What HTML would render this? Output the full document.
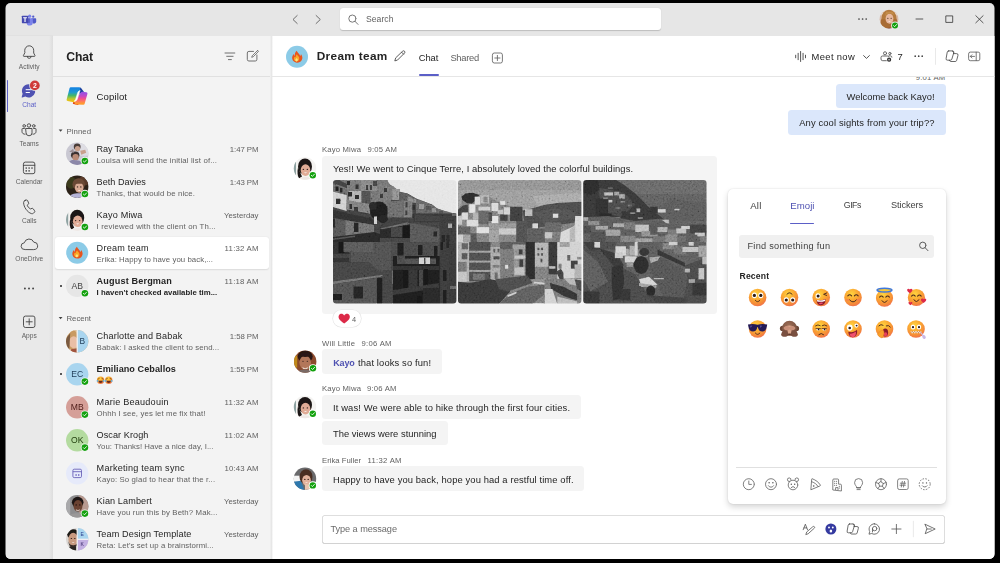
<!DOCTYPE html><html><head><meta charset="utf-8"><title>Chat</title><style>
html,body{margin:0;padding:0;background:#000;}body{width:1000px;height:563px;overflow:hidden;position:relative;font-family:"Liberation Sans", sans-serif;}
#win{position:absolute;left:0;top:0;width:1000px;height:563px;clip-path:inset(3px 5.5px 4px 5.5px round 5px);background:#e6e6e6;overflow:hidden;}
.t{position:absolute;white-space:nowrap;}#tx{position:absolute;left:0;top:0;width:1000px;height:563px;will-change:transform;}
svg{position:absolute;overflow:visible;will-change:transform;}

</style></head><body><div id="win">
<div style="position:absolute;left:5.5px;top:35.6px;width:47.1px;height:524px;background:#e9e9e9;border-radius:0px;"></div>
<div style="position:absolute;left:49.4px;top:36px;width:3.2px;height:524px;background:linear-gradient(90deg,#e9e9e9,#dddddd);border-radius:0px;"></div>
<div style="position:absolute;left:5.5px;top:35.2px;width:47.1px;height:0.8px;background:#e1e1e1;border-radius:0px;"></div>
<div style="position:absolute;left:52.6px;top:36px;width:217.8px;height:524px;background:#f3f3f3;border-radius:0px;"></div>
<div style="position:absolute;left:272px;top:36px;width:723px;height:524px;background:#ffffff;border-radius:0px;"></div>
<div style="position:absolute;left:270px;top:36px;width:3.2px;height:524px;background:linear-gradient(90deg,#f3f3f3,#e6e6e6 45%,#e9e9e9 60%,#ffffff);border-radius:0px;"></div>
<div style="position:absolute;left:52.6px;top:76px;width:217.8px;height:1px;background:#e0e0e0;border-radius:0px;"></div>
<div style="position:absolute;left:272px;top:76px;width:723px;height:1px;background:#e6e6e6;border-radius:0px;"></div>
<div style="position:absolute;left:340px;top:8px;width:321px;height:22px;background:#ffffff;border-radius:3px;box-shadow:0 0.5px 1px rgba(0,0,0,.18);"></div>
<div style="position:absolute;left:6.8px;top:79.8px;width:1.7px;height:32.2px;background:#5b5fc7;border-radius:1px;"></div>
<div style="position:absolute;left:55px;top:236.8px;width:214px;height:32.2px;background:#ffffff;border-radius:3px;box-shadow:0 0.5px 1.5px rgba(0,0,0,.10);"></div>
<div style="position:absolute;left:60.2px;top:284.9px;width:2px;height:2px;background:#242424;border-radius:1px;"></div>
<div style="position:absolute;left:60.2px;top:373.3px;width:2px;height:2px;background:#242424;border-radius:1px;"></div>
<div style="position:absolute;left:418.5px;top:74px;width:20.5px;height:2px;background:#5b5fc7;border-radius:1px;"></div>
<div style="position:absolute;left:272px;top:77px;width:723px;height:8px;overflow:hidden"><span style="position:absolute;right:49.600px;top:-3.700px;font-size:7.700px;line-height:10px;color:#616161;letter-spacing:.2px;white-space:nowrap">9:01 AM</span></div>
<div style="position:absolute;left:835.8px;top:84px;width:109.8px;height:24.4px;background:#dbe7fb;border-radius:3.5px;"></div>
<div style="position:absolute;left:788.4px;top:110px;width:157.2px;height:24.8px;background:#dbe7fb;border-radius:3.5px;"></div>
<div style="position:absolute;left:322px;top:156px;width:395px;height:158.2px;background:#f4f4f4;border-radius:3.5px;"></div>
<div style="position:absolute;left:333.3px;top:309.6px;width:27.7px;height:17.4px;background:#ffffff;border-radius:9px;box-shadow:0 0 0 0.6px #e3e3e3;"></div>
<div style="position:absolute;left:322px;top:349px;width:120.3px;height:25px;background:#f4f4f4;border-radius:3.5px;"></div>
<div style="position:absolute;left:322px;top:394.5px;width:259px;height:24.5px;background:#f4f4f4;border-radius:3.5px;"></div>
<div style="position:absolute;left:322px;top:420.8px;width:125.7px;height:24.2px;background:#f4f4f4;border-radius:3.5px;"></div>
<div style="position:absolute;left:322px;top:466px;width:262px;height:24.8px;background:#f4f4f4;border-radius:3.5px;"></div>
<div style="position:absolute;left:321.8px;top:514.6px;width:623.7px;height:29px;background:#ffffff;border-radius:3.5px;box-shadow:inset 0 0 0 0.7px #d4d4d4, inset 0 -0.6px 0 0.2px #bdbdbd;"></div>
<div style="position:absolute;left:728.4px;top:189px;width:217.2px;height:314.8px;background:#ffffff;border-radius:5px;box-shadow:0 3px 6px rgba(0,0,0,.17),0 0 1.5px rgba(0,0,0,.14);"></div>
<div style="position:absolute;left:790.3px;top:222.5px;width:24.2px;height:1.6px;background:#5b5fc7;border-radius:1px;"></div>
<div style="position:absolute;left:739px;top:235.2px;width:195.3px;height:22.4px;background:#f0f0f0;border-radius:3px;"></div>
<div style="position:absolute;left:736.2px;top:467.2px;width:200.8px;height:0.7px;background:#e0e0e0;border-radius:0px;"></div>
<svg width="1000" height="563" viewBox="0 0 1000 563" style="left:0;top:0"><defs><filter id="b1" x="-20%" y="-20%" width="140%" height="140%"><feGaussianBlur stdDeviation="0.7"/></filter>
<filter id="b2" x="-20%" y="-20%" width="140%" height="140%"><feGaussianBlur stdDeviation="1.2"/></filter>
<filter id="b05" x="-20%" y="-20%" width="140%" height="140%"><feGaussianBlur stdDeviation="0.45"/></filter>
<clipPath id="c1"><circle r="11.2"/></clipPath>
<clipPath id="c2"><circle r="11.2"/></clipPath>
<clipPath id="c3"><circle r="11.2"/></clipPath>
<clipPath id="c4"><circle r="11"/></clipPath>
<clipPath id="c5"><circle r="11.2"/></clipPath>
<clipPath id="c6"><circle r="11.2"/></clipPath>
<clipPath id="c7"><circle r="11.2"/></clipPath>
<clipPath id="c8"><circle r="11.2"/></clipPath>
<clipPath id="c9"><circle r="11.2"/></clipPath>
<clipPath id="c10"><circle r="11.2"/></clipPath>
<clipPath id="c11"><circle r="11.2"/></clipPath>
<clipPath id="c12"><circle r="11.2"/></clipPath>
<clipPath id="c13"><circle r="11"/></clipPath>
<clipPath id="c14"><circle r="11.2"/></clipPath>
<clipPath id="c15"><circle r="11.2"/></clipPath>
<clipPath id="c16"><circle r="11.2"/></clipPath>
<clipPath id="c17"><circle r="11.2"/></clipPath>
<clipPath id="c18"><circle r="9.4"/></clipPath>
<linearGradient id="cpl" x1="0" y1="0" x2="0" y2="1"><stop offset="0" stop-color="#1686e0"/><stop offset=".3" stop-color="#1f9ad0"/><stop offset=".55" stop-color="#45b76a"/><stop offset=".8" stop-color="#b9c832"/><stop offset="1" stop-color="#f2c010"/></linearGradient>
<linearGradient id="cpr" x1="0" y1="0" x2="0" y2="1"><stop offset="0" stop-color="#9a4fe0"/><stop offset=".3" stop-color="#c548c4"/><stop offset=".55" stop-color="#f2508c"/><stop offset=".8" stop-color="#ff7a5a"/><stop offset="1" stop-color="#ff9a2e"/></linearGradient>
<filter id="pb" x="-5%" y="-5%" width="110%" height="110%"><feGaussianBlur stdDeviation="0.65"/></filter>
<filter id="pb2" x="-5%" y="-5%" width="110%" height="110%"><feGaussianBlur stdDeviation="1.1"/></filter>
<filter id="nz" x="0" y="0" width="100%" height="100%"><feTurbulence type="fractalNoise" baseFrequency="0.55" numOctaves="2" seed="7" result="n"/><feColorMatrix in="n" type="matrix" values="0.33 0.33 0.33 0 0  0.33 0.33 0.33 0 0  0.33 0.33 0.33 0 0  0 0 0 0 1" result="g"/><feComponentTransfer in="g"><feFuncR type="linear" slope="2.2" intercept="-0.6"/><feFuncG type="linear" slope="2.2" intercept="-0.6"/><feFuncB type="linear" slope="2.2" intercept="-0.6"/></feComponentTransfer></filter>
<clipPath id="pc1"><rect width="123.4" height="123.4" rx="3.2"/></clipPath>
<clipPath id="pc2"><rect width="123.4" height="123.4" rx="3.2"/></clipPath>
<clipPath id="pc3"><rect width="123.4" height="123.4" rx="3.2"/></clipPath>
<radialGradient id="eg" cx=".42" cy=".3" r=".8"><stop offset="0" stop-color="#ffd540"/><stop offset=".4" stop-color="#fbab32"/><stop offset=".75" stop-color="#f4863a"/><stop offset="1" stop-color="#ec6260"/></radialGradient>
<radialGradient id="mg" cx=".45" cy=".35" r=".75"><stop offset="0" stop-color="#a07058"/><stop offset="1" stop-color="#6b4636"/></radialGradient></defs><g transform="translate(27.05 19.3) scale(0.72)" >
<circle cx="3.6" cy="-4.3" r="2.3" fill="#7b83eb"/>
<circle cx="8.6" cy="-3.6" r="1.6" fill="#5059c9"/>
<path d="M6.2 -1.4h5.6a.9 .9 0 0 1 .9 .9v3.6a2.9 2.9 0 0 1 -5.2 1.7z" fill="#5059c9"/>
<path d="M-1.2 -1.4h8.3a.9 .9 0 0 1 .9 .9v4.6a4.3 4.3 0 0 1 -8.6 .6z" fill="#7b83eb"/>
<path d="M0.4 -1.4h3.6v6.4h-3.6z" fill="#3d42a8" opacity=".55"/>
<rect x="-7.200" y="-5" width="8.800" height="10.400" rx=".9" fill="#4549b0"/>
<path d="M-5.400 -2.800h5.200v1.400h-1.800v5h-1.600v-5h-1.800z" fill="#fff"/>
</g>
<g transform="translate(295 19.5)" ><path d="M2.2 -4 L-2 0 L2.2 4" fill="none" stroke="#616161" stroke-width="0.9" stroke-linecap="round" stroke-linejoin="round" /></g>
<g transform="translate(318.3 19.5)" ><path d="M-2.2 -4 L2 0 L-2.2 4" fill="none" stroke="#616161" stroke-width="0.9" stroke-linecap="round" stroke-linejoin="round" /></g>
<g transform="translate(352.4 18.6)" ><path d="M3.6 0a3.6 3.6 0 1 1 -7.2 0a3.6 3.6 0 1 1 7.2 0M2.6 2.7L5.6 5.8" fill="none" stroke="#616161" stroke-width="0.85" stroke-linecap="round" stroke-linejoin="round" /></g>
<g transform="translate(862.6 19)" ><circle cx="-3.6" r=".85" fill="#424242"/><circle r=".85" fill="#424242"/><circle cx="3.6" r=".85" fill="#424242"/></g>
<g transform="translate(0 0)" ><path d="M916 19h6.8" fill="none" stroke="#333" stroke-width="0.8" stroke-linecap="round" stroke-linejoin="round" /><path d="M946.2 15.9h6.5v6.5h-6.5z" fill="none" stroke="#333" stroke-width="0.8" stroke-linecap="round" stroke-linejoin="round" /><path d="M975.8 15.7l7.3 7.1M983.1 15.7l-7.3 7.1" fill="none" stroke="#333" stroke-width="0.8" stroke-linecap="round" stroke-linejoin="round" /></g>
<g transform="translate(29.2 52)" ><path d="M-4.5 -1.7a4.5 4.5 0 0 1 9 0v2.7l1.3 2.6a.5 .5 0 0 1 -.45 .75h-10.7a.5 .5 0 0 1 -.45 -.75l1.3 -2.6z" fill="none" stroke="#424242" stroke-width="0.9" stroke-linecap="round" stroke-linejoin="round" /><path d="M-1.9 4.5a1.9 1.9 0 0 0 3.8 0" fill="none" stroke="#424242" stroke-width="0.9" stroke-linecap="round" stroke-linejoin="round" /></g>
<g transform="translate(28.7 90.9)" ><path d="M0 -6.6a6.6 6.6 0 1 1 -3.3 12.3l-3.1 .9a.5 .5 0 0 1 -.6 -.6l.9 -3.1a6.6 6.6 0 0 1 6.1 -9.5z" fill="#4f52b2"/>
<path d="M-2.6 -1.2h5.2M-2.6 1.6h3.4" stroke="#fff" stroke-width="1" stroke-linecap="round"/></g>
<g transform="translate(34.8 85.4)" ><circle r="5.6" fill="#e9e9e9"/><circle r="4.9" fill="#cf3a3a"/><text x="0" y="2.4" text-anchor="middle" font-family="Liberation Sans, sans-serif" font-size="6.8" font-weight="700" fill="#fff">2</text></g>
<g transform="translate(29 129.8)" ><path d="M1.75 -4.3a1.75 1.75 0 1 1 -3.5 0a1.75 1.75 0 1 1 3.5 0" fill="none" stroke="#424242" stroke-width="0.9" stroke-linecap="round" stroke-linejoin="round" /><path d="M-3 -1.3h6v4.3a3 3 0 0 1 -6 0z" fill="none" stroke="#424242" stroke-width="0.9" stroke-linecap="round" stroke-linejoin="round" /><path d="M-3.5 -3.9a1.3 1.3 0 1 1 -2.6 0a1.3 1.3 0 1 1 2.6 0M6.1 -3.9a1.3 1.3 0 1 1 -2.6 0a1.3 1.3 0 1 1 2.6 0" fill="none" stroke="#424242" stroke-width="0.9" stroke-linecap="round" stroke-linejoin="round" /><path d="M-4.6 -1.3h-1.8a.6 .6 0 0 0 -.6 .6v2.6a2.6 2.6 0 0 0 3.2 2.5M4.6 -1.3h1.8a.6 .6 0 0 1 .6 .6v2.6a2.6 2.6 0 0 1 -3.2 2.5" fill="none" stroke="#424242" stroke-width="0.9" stroke-linecap="round" stroke-linejoin="round" /></g>
<g transform="translate(29.1 167.9)" ><path d="M-5.7 -4a1.8 1.8 0 0 1 1.8 -1.8h7.8a1.8 1.8 0 0 1 1.8 1.8v8a1.8 1.8 0 0 1 -1.8 1.8h-7.8a1.8 1.8 0 0 1 -1.8 -1.8zM-5.7 -2.6h11.4" fill="none" stroke="#424242" stroke-width="0.9" stroke-linecap="round" stroke-linejoin="round" /><circle cx="-2.9" cy="0.2" r=".8" fill="#424242"/><circle cx="0" cy="0.2" r=".8" fill="#424242"/><circle cx="2.9" cy="0.2" r=".8" fill="#424242"/><circle cx="-2.9" cy="3" r=".8" fill="#424242"/><circle cx="0" cy="3" r=".8" fill="#424242"/></g>
<g transform="translate(28.7 206.3)" ><path d="M-3.6 -5.9l1.2 -.4a1.1 1.1 0 0 1 1.3 .6l1 2.4a1.1 1.1 0 0 1 -.3 1.3l-1.2 1a7.5 7.5 0 0 0 3.3 3.6l1.6 -.5a1.1 1.1 0 0 1 1.2 .4l1.4 2a1.1 1.1 0 0 1 -.1 1.4l-.9 .9a2.2 2.2 0 0 1 -2.2 .5c-4.100 -1.300 -7.800 -6.700 -7.800 -11a2.2 2.2 0 0 1 1.500 -2.200z" fill="none" stroke="#424242" stroke-width="0.9" stroke-linecap="round" stroke-linejoin="round" /></g>
<g transform="translate(29.2 244.7)" ><path d="M-4.4 4.9a3.4 3.4 0 0 1 -.5 -6.8a5 5 0 0 1 9.500 -.6a3.700 3.700 0 0 1 .3 7.400z" fill="none" stroke="#424242" stroke-width="0.9" stroke-linecap="round" stroke-linejoin="round" /></g>
<g transform="translate(29 288.5)" ><circle cx="-4.1" r=".95" fill="#424242"/><circle r=".95" fill="#424242"/><circle cx="4.1" r=".95" fill="#424242"/></g>
<g transform="translate(29.2 321.8)" ><path d="M-5.7 -3.9a1.8 1.8 0 0 1 1.8 -1.8h7.8a1.8 1.8 0 0 1 1.8 1.8v7.8a1.8 1.8 0 0 1 -1.8 1.8h-7.8a1.8 1.8 0 0 1 -1.8 -1.8zM0 -3v6M-3 0h6" fill="none" stroke="#424242" stroke-width="0.9" stroke-linecap="round" stroke-linejoin="round" /></g>
<g transform="translate(229.9 56.3)" ><path d="M-4.9 -3.3h9.800M-3.2 0h6.400M-1.500 3.300h3" fill="none" stroke="#616161" stroke-width="0.9" stroke-linecap="round" stroke-linejoin="round" /></g>
<g transform="translate(252 56)" ><path d="M1.5 -4.600h-4.600a1.600 1.600 0 0 0 -1.600 1.600v6.400a1.600 1.600 0 0 0 1.600 1.600h6.400a1.600 1.600 0 0 0 1.600 -1.600v-4.400" fill="none" stroke="#616161" stroke-width="0.9" stroke-linecap="round" stroke-linejoin="round" /><path d="M5.200 -5.200l-5 5l-.5 1.500l1.500 -.5l5 -5a.7 .7 0 0 0 -1 -1z" fill="none" stroke="#616161" stroke-width="0.8" stroke-linecap="round" stroke-linejoin="round" /></g>
<g transform="translate(60.6 130.6)" ><path d="M-1.900 -1.100h3.800l-1.900 2.300z" fill="#424242"/></g>
<g transform="translate(60.6 318)" ><path d="M-1.900 -1.100h3.800l-1.900 2.300z" fill="#424242"/></g>
<g transform="translate(399.3 56)" ><path d="M3.300 -4.800a1.300 1.300 0 0 1 1.900 1.900l-7 7l-2.700 .8l.8 -2.700zM2.300 -3.800l1.900 1.900" fill="none" stroke="#424242" stroke-width="0.85" stroke-linecap="round" stroke-linejoin="round" /></g>
<g transform="translate(497.4 58)" ><path d="M-5 -3.200a1.800 1.800 0 0 1 1.800 -1.800h6.400a1.800 1.800 0 0 1 1.800 1.800v6.400a1.800 1.800 0 0 1 -1.800 1.800h-6.400a1.800 1.800 0 0 1 -1.800 -1.800zM0 -2.600v5.200M-2.600 0h5.200" fill="none" stroke="#616161" stroke-width="0.85" stroke-linecap="round" stroke-linejoin="round" /></g>
<g transform="translate(800.6 56.5)" ><path d="M-4.900 -1.300v2.600M-2.450 -3.200v6.400M0 -5v10M2.450 -3.200v6.400M4.900 -1.300v2.600" fill="none" stroke="#424242" stroke-width="0.9" stroke-linecap="round" stroke-linejoin="round" /></g>
<g transform="translate(866.5 57)" ><path d="M-2.900 -1.400l2.900 2.800l2.900 -2.800" fill="none" stroke="#424242" stroke-width="0.9" stroke-linecap="round" stroke-linejoin="round" /></g>
<g transform="translate(0 0)" ><path d="M886.600 53.300a1.550 1.550 0 1 1 -3.100 0a1.550 1.550 0 1 1 3.100 0M891.050 53.500a1.150 1.150 0 1 1 -2.300 0a1.150 1.150 0 1 1 2.300 0" fill="none" stroke="#424242" stroke-width="0.8" stroke-linecap="round" stroke-linejoin="round" /><path d="M886.300 60.700h-3.600a1.700 1.700 0 0 1 -1.700 -1.700v-1.500a1.500 1.500 0 0 1 1.500 -1.500h5a1.500 1.500 0 0 1 1.100 .5M888.900 55.900h1.800a1.300 1.300 0 0 1 1.200 1.300" fill="none" stroke="#424242" stroke-width="0.8" stroke-linecap="round" stroke-linejoin="round" /><circle cx="889.1" cy="59.7" r="2.100" fill="#2a2a2a"/><path d="M889.1 58.700v2M888.1 59.700h2" stroke="#fff" stroke-width=".5"/></g>
<g transform="translate(918.7 56.2)" ><circle cx="-3.500" r=".85" fill="#424242"/><circle r=".85" fill="#424242"/><circle cx="3.500" r=".85" fill="#424242"/></g>
<g transform="translate(0 0)" ><rect x="935.1" y="48" width=".7" height="16.800" fill="#e0e0e0"/></g>
<g transform="translate(952 56.2)" ><path d="M-3.300 -5.300h3.600a1.500 1.500 0 0 1 1.450 1.900l-1.900 6.300a1.500 1.500 0 0 1 -1.450 1.100h-2.800a1.500 1.500 0 0 1 -1.450 -1.900l1.100 -6.300a1.500 1.500 0 0 1 1.450 -1.100z" fill="none" stroke="#424242" stroke-width="0.8" stroke-linecap="round" stroke-linejoin="round" /><path d="M1.700 -2.600h2.800a1.500 1.500 0 0 1 1.450 1.900l-1.300 4.900a1.500 1.500 0 0 1 -1.450 1.100h-4.400a1.500 1.500 0 0 1 -1.400 -1.300" fill="none" stroke="#424242" stroke-width="0.8" stroke-linecap="round" stroke-linejoin="round" /><path d="M.4 -5.200c1.200 .4 1.400 1.300 1.200 2.400" fill="none" stroke="#424242" stroke-width="0.8" stroke-linecap="round" stroke-linejoin="round" /></g>
<g transform="translate(974.2 56.4)" ><path d="M-5.600 -2.700a1.600 1.600 0 0 1 1.600 -1.600h8a1.600 1.600 0 0 1 1.600 1.600v5.400a1.600 1.600 0 0 1 -1.600 1.600h-8a1.600 1.600 0 0 1 -1.600 -1.600zM2 -4.200v8.400M-3.700 0h4M-2.300 -1.600l-1.600 1.600l1.600 1.600" fill="none" stroke="#616161" stroke-width="0.85" stroke-linecap="round" stroke-linejoin="round" /></g>
<g transform="translate(808.5 529)" ><path d="M-5.300 .7l2.150 -5.500l2.150 5.500M-4.500 -1.100h2.700" fill="none" stroke="#505050" stroke-width="0.8" stroke-linecap="round" stroke-linejoin="round" /><path d="M4.300 -2.300a1.050 1.050 0 0 1 1.500 1.500l-6.200 5.600l-2.300 .8l.8 -2.300z" fill="none" stroke="#505050" stroke-width="0.78" stroke-linecap="round" stroke-linejoin="round" /></g>
<g transform="translate(830.9 529)" ><circle r="5.500" fill="#353aa0"/><circle cx="-1.900" cy="-1.500" r=".95" fill="#fff"/><circle cx="1.900" cy="-1.500" r=".95" fill="#fff"/><ellipse cx="0" cy="2.100" rx="1.300" ry="1.500" fill="#fff"/></g>
<g transform="translate(852.7 529) scale(0.95)" ><path d="M-3.300 -5.300h3.600a1.500 1.500 0 0 1 1.450 1.900l-1.900 6.300a1.500 1.500 0 0 1 -1.450 1.100h-2.800a1.500 1.500 0 0 1 -1.450 -1.900l1.100 -6.300a1.500 1.500 0 0 1 1.450 -1.100z" fill="none" stroke="#424242" stroke-width="0.8" stroke-linecap="round" stroke-linejoin="round" /><path d="M1.700 -2.600h2.800a1.500 1.500 0 0 1 1.450 1.900l-1.300 4.900a1.500 1.500 0 0 1 -1.450 1.100h-4.400a1.500 1.500 0 0 1 -1.400 -1.300" fill="none" stroke="#424242" stroke-width="0.8" stroke-linecap="round" stroke-linejoin="round" /><path d="M.4 -5.200c1.200 .4 1.400 1.300 1.200 2.400" fill="none" stroke="#424242" stroke-width="0.8" stroke-linecap="round" stroke-linejoin="round" /></g>
<g transform="translate(874.3 529)" ><path d="M0 -5.200a5.200 5.200 0 1 1 -2.600 9.700l-2.700 .7l.7 -2.700a5.200 5.200 0 0 1 4.600 -7.700z" fill="none" stroke="#505050" stroke-width="0.8" stroke-linecap="round" stroke-linejoin="round" /><path d="M2.600 -.4a2.200 2.200 0 1 1 -4.400 0a2.200 2.200 0 1 1 4.400 0M-1.800 -.4v3.400" fill="none" stroke="#505050" stroke-width="0.8" stroke-linecap="round" stroke-linejoin="round" /></g>
<g transform="translate(896.4 529)" ><path d="M0 -4.600v9.200M-4.600 0h9.200" fill="none" stroke="#505050" stroke-width="0.8" stroke-linecap="round" stroke-linejoin="round" /></g>
<g transform="translate(0 0)" ><rect x="912.9" y="520.8" width=".7" height="16.400" fill="#e0e0e0"/></g>
<g transform="translate(930 529)" ><path d="M-4.800 -4.700l10 4.700l-10 4.700l1.600 -4.700zM-3.200 0h4.500" fill="none" stroke="#505050" stroke-width="0.8" stroke-linecap="round" stroke-linejoin="round" /></g>
<g transform="translate(923.3 246.2)" ><path d="M2.700 -.9a3.200 3.200 0 1 1 -6.400 0a3.200 3.200 0 1 1 6.400 0M1.800 1.500L4.700 4.500" fill="none" stroke="#424242" stroke-width="0.85" stroke-linecap="round" stroke-linejoin="round" /></g>
<g transform="translate(748.8 484.2)" ><path d="M5.500 0a5.500 5.500 0 1 1 -11 0a5.500 5.500 0 1 1 11 0M0 -3.200v3.400h2.600" fill="none" stroke="#555" stroke-width="0.75" stroke-linecap="round" stroke-linejoin="round" /></g>
<g transform="translate(771 484.2)" ><path d="M5.500 0a5.500 5.500 0 1 1 -11 0a5.500 5.500 0 1 1 11 0M-2.600 1.500a3 3 0 0 0 5.200 0" fill="none" stroke="#555" stroke-width="0.75" stroke-linecap="round" stroke-linejoin="round" /><circle cx="-1.900" cy="-1.400" r=".75" fill="#555"/><circle cx="1.900" cy="-1.400" r=".75" fill="#555"/></g>
<g transform="translate(793 484.2)" ><path d="M4.800 .8a4.800 4.800 0 1 1 -9.600 0a4.800 4.800 0 1 1 9.600 0M-3.500 -2.700a1.800 1.800 0 1 1 1.500 -1.500M3.500 -2.700a1.800 1.800 0 1 0 -1.500 -1.500M-1.800 3.600a2 2 0 0 1 3.600 0" fill="none" stroke="#555" stroke-width="0.75" stroke-linecap="round" stroke-linejoin="round" /><circle cx="-1.700" cy="0" r=".7" fill="#555"/><circle cx="1.700" cy="0" r=".7" fill="#555"/></g>
<g transform="translate(815.2 484.2)" ><path d="M-4.300 5.200l.8 -10.200a.5 .5 0 0 1 .7 -.4c3.400 1.300 6.300 3.500 8 6.300a.5 .5 0 0 1 -.2 .7zM-3.200 -2.400c2.800 1 4.700 2.500 6 4.600" fill="none" stroke="#555" stroke-width="0.75" stroke-linecap="round" stroke-linejoin="round" /><circle cx="-1.500" cy="1.800" r=".8" fill="#555"/></g>
<g transform="translate(836.8 484.2)" ><path d="M-4 5.400v-9.600a1 1 0 0 1 1 -1h3.800a1 1 0 0 1 1 1v4.200h1.800a1 1 0 0 1 1 1v5.400zM-1.200 5.400v-2h2.400v2" fill="none" stroke="#555" stroke-width="0.75" stroke-linecap="round" stroke-linejoin="round" /><circle cx="-2.1" cy="-3" r=".55" fill="#555"/><circle cx="-0.2" cy="-3" r=".55" fill="#555"/><circle cx="-2.1" cy="-1" r=".55" fill="#555"/><circle cx="-0.2" cy="-1" r=".55" fill="#555"/><circle cx="-2.1" cy="1" r=".55" fill="#555"/><circle cx="-0.2" cy="1" r=".55" fill="#555"/><circle cx="2.5" cy="2" r=".55" fill="#555"/><circle cx="2.5" cy="3.8" r=".55" fill="#555"/></g>
<g transform="translate(858.6 484.2)" ><path d="M-1.800 3.400c0 -1.500 -2.200 -2.400 -2.200 -5a4 4 0 0 1 8 0c0 2.600 -2.200 3.500 -2.200 5zM-1.600 5.400h3.200M-1.800 3.400h3.600" fill="none" stroke="#555" stroke-width="0.75" stroke-linecap="round" stroke-linejoin="round" /></g>
<g transform="translate(881 484.2)" ><path d="M5.500 0a5.500 5.500 0 1 1 -11 0a5.500 5.500 0 1 1 11 0M0 -2.400l2.300 1.700l-.9 2.700h-2.800l-.9 -2.700zM0 -2.400v-3M2.300 -.7l2.900 -1M1.400 2l1.800 2.500M-1.400 2l-1.800 2.500M-2.300 -.7l-2.900 -1" fill="none" stroke="#555" stroke-width="0.75" stroke-linecap="round" stroke-linejoin="round" /></g>
<g transform="translate(902.9 484.2)" ><path d="M-5.300 -3.700a1.600 1.600 0 0 1 1.600 -1.600h7.400a1.600 1.600 0 0 1 1.600 1.600v7.400a1.600 1.600 0 0 1 -1.600 1.600h-7.400a1.600 1.600 0 0 1 -1.600 -1.600zM-.6 -2.800l-1 5.600M1.600 -2.800l-1 5.600M-2.600 -1h5.400M-2.900 1h5.400" fill="none" stroke="#555" stroke-width="0.72" stroke-linecap="round" stroke-linejoin="round" /></g>
<g transform="translate(924.7 484.2)" ><circle r="5.500" fill="none" stroke="#555" stroke-width=".8" stroke-dasharray="1.500 1.380"/><path d="M-2.400 1.600a2.800 2.800 0 0 0 4.800 0" fill="none" stroke="#555" stroke-width="0.75" stroke-linecap="round" stroke-linejoin="round" /><circle cx="-1.800" cy="-1.300" r=".7" fill="#555"/><circle cx="1.800" cy="-1.300" r=".7" fill="#555"/></g>
<g transform="translate(77.2 153.7)" ><g clip-path="url(#c1)"><rect x="-12" y="-12" width="24" height="24" fill="#c9c8d2"/>
<g filter="url(#b1)">
<rect x="2" y="-12" width="12" height="14" fill="#dedde3"/>
<ellipse cx="0" cy="-7" rx="3.4" ry="3.2" fill="#4a3d38"/>
<ellipse cx="0.3" cy="-5" rx="2.6" ry="2.6" fill="#c9a08c"/>
<ellipse cx="-2" cy="1.5" rx="4.2" ry="3.6" fill="#3a3030"/>
<ellipse cx="-1.6" cy="3.6" rx="3.2" ry="3.2" fill="#b98a76"/>
<path d="M-9 12c0 -5 3 -6 7 -5.500c4 0 7 1 8 5.500z" fill="#8b87a8"/>
<path d="M3 -3l5 -1l1 3l-5 2z" fill="#c9a08c"/>
<path d="M-8 -2l4 -3l1 4z" fill="#9c8f95"/>
</g></g><circle cx="7.7" cy="7.3" r="4.2" fill="#f3f3f3"/><circle cx="7.7" cy="7.3" r="3.3" fill="#13a10e"/><path d="M6.2 7.3999999999999995l1.1 1.1l2 -2.2" fill="none" stroke="#fff" stroke-width=".85" stroke-linecap="round" stroke-linejoin="round"/></g>
<g transform="translate(77.2 186.7)" ><g clip-path="url(#c2)"><rect x="-12" y="-12" width="24" height="24" fill="#2c2218"/>
<g filter="url(#b1)">
<ellipse cx="-6" cy="-4" rx="5" ry="6" fill="#3b3a1e"/>
<ellipse cx="7" cy="-6" rx="5" ry="5" fill="#5a3a2a"/>
<ellipse cx="1.500" cy="-2.500" rx="6.200" ry="6" fill="#6b4a36"/>
<ellipse cx="2" cy="1" rx="4.300" ry="5" fill="#d9ab94"/>
<path d="M-8 12c1 -5 4 -5.500 10 -5.500c5 0 8 1 9 5.500z" fill="#b5b3d6"/>
<ellipse cx="1.500" cy="-5.200" rx="4.600" ry="2.300" fill="#6b4a36"/>
<ellipse cx="0.3" cy="0.2" rx=".75" ry=".55" fill="#3a2620"/><ellipse cx="3.6" cy="0.2" rx=".75" ry=".55" fill="#3a2620"/><path d="M0.6000000000000001 3.2q1.4 1.54 2.8 0z" fill="#fff"/></g></g><circle cx="7.7" cy="7.3" r="4.2" fill="#f3f3f3"/><circle cx="7.7" cy="7.3" r="3.3" fill="#13a10e"/><path d="M6.2 7.3999999999999995l1.1 1.1l2 -2.2" fill="none" stroke="#fff" stroke-width=".85" stroke-linecap="round" stroke-linejoin="round"/></g>
<g transform="translate(77.2 219.7)" ><g clip-path="url(#c3)"><rect x="-12" y="-12" width="24" height="24" fill="#f4f3f1"/>
<g filter="url(#b1)">
<path d="M-12 -6l3 -3v16l-3 3z" fill="#8fa3a3"/>
<ellipse cx="0" cy="-2" rx="7" ry="8" fill="#1d1715"/>
<path d="M-7 -1c-1 5 -.5 8 1 11l3 -2z" fill="#1d1715"/>
<ellipse cx=".5" cy="1.600" rx="4.800" ry="5.800" fill="#e0ab96"/>
<path d="M-5 -2c2 -3 6 -4 10 -1l-1 -3h-8z" fill="#1d1715"/>
<path d="M-7 12c1 -3 3 -3.500 7 -3.500s6 .5 8 3.500z" fill="#efe9e6"/>
<ellipse cx="-1.6" cy="0.9" rx=".75" ry=".55" fill="#3a2620"/><ellipse cx="2.4" cy="0.9" rx=".75" ry=".55" fill="#3a2620"/><path d="M-1.0 3.9q1.5 1.6500000000000001 3 0z" fill="#fff"/></g></g><circle cx="7.7" cy="7.3" r="4.2" fill="#f3f3f3"/><circle cx="7.7" cy="7.3" r="3.3" fill="#13a10e"/><path d="M6.2 7.3999999999999995l1.1 1.1l2 -2.2" fill="none" stroke="#fff" stroke-width=".85" stroke-linecap="round" stroke-linejoin="round"/></g>
<g transform="translate(77.2 252.7)" ><g clip-path="url(#c4)"><rect x="-12" y="-12" width="24" height="24" fill="#8ccbe7"/>
<path d="M-.3 -6c.6 1.800 2.800 2.800 3.600 5.200c.6 -.6 .7 -1.300 .6 -2c1.500 1.700 2 4.200 .9 6.100c-1 1.800 -2.900 2.700 -4.900 2.600c-2.200 -.1 -4.100 -1.500 -4.600 -3.600c-.5 -2 .3 -3.700 1.500 -5c0 .8 .3 1.500 .9 1.900c-.1 -2.200 .6 -3.900 2 -5.200z" fill="#e8541e"/>
<path d="M-.1 -2.500c.5 1.300 2 2 2.300 3.700c.3 1.700 -.8 3.300 -2.400 3.400c-1.500 .1 -2.800 -1 -2.900 -2.500c-.1 -1.100 .5 -1.900 1.100 -2.500c.1 .5 .3 .8 .7 1c0 -1.300 .4 -2.300 1.200 -3.100z" fill="#f9a825"/>
<path d="M-.2 1.200c.5 .6 1.100 1.200 1 2.100c-.1 .8 -.6 1.300 -1.200 1.300c-.7 0 -1.300 -.6 -1.300 -1.400c0 -.8 .9 -1.200 1.500 -2z" fill="#ffe082"/></g></g>
<g transform="translate(77.2 285.9)" ><g clip-path="url(#c5)"><rect x="-12" y="-12" width="24" height="24" fill="#e6e6e6"/><text x="0" y="3.10" text-anchor="middle" font-family="Liberation Sans, sans-serif" font-size="8.6" fill="#424242">AB</text></g><circle cx="7.7" cy="7.3" r="4.2" fill="#f3f3f3"/><circle cx="7.7" cy="7.3" r="3.3" fill="#13a10e"/><path d="M6.2 7.3999999999999995l1.1 1.1l2 -2.2" fill="none" stroke="#fff" stroke-width=".85" stroke-linecap="round" stroke-linejoin="round"/></g>
<g transform="translate(77.2 341.3)" ><g clip-path="url(#c6)"><rect x="-12" y="-12" width="24" height="24" fill="#d9b98c"/>
<g filter="url(#b1)">
<ellipse cx="-6" cy="-2" rx="7" ry="10" fill="#c89a62"/>
<ellipse cx="-3.500" cy="1" rx="4.500" ry="6" fill="#e9bfa6"/>
<path d="M-12 -2l5 -6l-1 18h-4z" fill="#7a5a40"/>
<path d="M-6 8l6 -1v5h-8z" fill="#a0533c"/>
</g><rect x="0" y="-12" width="12" height="24" fill="#a9d5ef"/><rect x="-.6" y="-12" width="1.200" height="24" fill="#f5f5f5"/><text x="5.200" y="3" text-anchor="middle" font-family="Liberation Sans, sans-serif" font-size="8.400" fill="#1f3b57">B</text></g></g>
<g transform="translate(77.2 374.3)" ><g clip-path="url(#c7)"><rect x="-12" y="-12" width="24" height="24" fill="#a9d5ef"/><text x="0" y="3.10" text-anchor="middle" font-family="Liberation Sans, sans-serif" font-size="8.6" fill="#1f3b57">EC</text></g><circle cx="7.7" cy="7.3" r="4.2" fill="#f3f3f3"/><circle cx="7.7" cy="7.3" r="3.3" fill="#13a10e"/><path d="M6.2 7.3999999999999995l1.1 1.1l2 -2.2" fill="none" stroke="#fff" stroke-width=".85" stroke-linecap="round" stroke-linejoin="round"/></g>
<g transform="translate(77.2 407.3)" ><g clip-path="url(#c8)"><rect x="-12" y="-12" width="24" height="24" fill="#d59f98"/><text x="0" y="3.10" text-anchor="middle" font-family="Liberation Sans, sans-serif" font-size="8.6" fill="#4d1a17">MB</text></g><circle cx="7.7" cy="7.3" r="4.2" fill="#f3f3f3"/><circle cx="7.7" cy="7.3" r="3.3" fill="#13a10e"/><path d="M6.2 7.3999999999999995l1.1 1.1l2 -2.2" fill="none" stroke="#fff" stroke-width=".85" stroke-linecap="round" stroke-linejoin="round"/></g>
<g transform="translate(77.2 440.3)" ><g clip-path="url(#c9)"><rect x="-12" y="-12" width="24" height="24" fill="#b4dba0"/><text x="0" y="3.10" text-anchor="middle" font-family="Liberation Sans, sans-serif" font-size="8.6" fill="#23400f">OK</text></g><circle cx="7.7" cy="7.3" r="4.2" fill="#f3f3f3"/><circle cx="7.7" cy="7.3" r="3.3" fill="#13a10e"/><path d="M6.2 7.3999999999999995l1.1 1.1l2 -2.2" fill="none" stroke="#fff" stroke-width=".85" stroke-linecap="round" stroke-linejoin="round"/></g>
<g transform="translate(77.2 473.3)" ><g clip-path="url(#c10)"><rect x="-12" y="-12" width="24" height="24" fill="#e6eafa"/><path d="M-4.300 -2.800a1.300 1.300 0 0 1 1.300 -1.300h6a1.300 1.300 0 0 1 1.300 1.300v5.800a1.300 1.300 0 0 1 -1.300 1.300h-6a1.300 1.300 0 0 1 -1.300 -1.300zM-4.300 -1.600h8.600" fill="none" stroke="#6a62b8" stroke-width=".9"/><path d="M-1.800 .6h1.400v2.200h-1.400zM.8 .6h1.400v2.200h-1.400z" fill="#8a84cc"/></g></g>
<g transform="translate(77.2 506.3)" ><g clip-path="url(#c11)"><rect x="-12" y="-12" width="24" height="24" fill="#8d8d8f"/>
<g filter="url(#b1)">
<rect x="2" y="-12" width="12" height="24" fill="#b89a90"/>
<rect x="-12" y="-12" width="5" height="24" fill="#a9a9ab"/>
<ellipse cx=".5" cy="-4" rx="5.800" ry="5.500" fill="#1e1512"/>
<ellipse cx=".8" cy="-.5" rx="4.500" ry="5.800" fill="#6b4331"/>
<path d="M-1.500 3c1.500 1 3 1 4.500 0l-.8 1.500h-3z" fill="#e6dcd6"/>
<path d="M-9 12c1 -4 4 -5 9.500 -5s8.500 1 9.500 5z" fill="#9a9898"/>
<ellipse cx="-1" cy="-1.4" rx=".75" ry=".55" fill="#1a100c"/><ellipse cx="2.6" cy="-1.4" rx=".75" ry=".55" fill="#1a100c"/><path d="M0.75 2.6q0.05 0.05500000000000001 0.1 0z" fill="#fff"/></g></g><circle cx="7.7" cy="7.3" r="4.2" fill="#f3f3f3"/><circle cx="7.7" cy="7.3" r="3.3" fill="#13a10e"/><path d="M6.2 7.3999999999999995l1.1 1.1l2 -2.2" fill="none" stroke="#fff" stroke-width=".85" stroke-linecap="round" stroke-linejoin="round"/></g>
<g transform="translate(77.2 539.3)" ><g clip-path="url(#c12)"><rect x="-12" y="-12" width="24" height="24" fill="#dad6d2"/>
<g filter="url(#b1)">
<ellipse cx="-4" cy="-5" rx="6" ry="5" fill="#1f1a18"/>
<ellipse cx="-4" cy="0" rx="4.800" ry="6.500" fill="#c79a80"/>
<path d="M-9 2c1 5 3 7 5 7s4 -2 5 -7c-1 3 -3 4 -5 4s-4 -1 -5 -4z" fill="#3a2e28"/>
<path d="M-12 12c0 -3 2 -4.500 4 -4.500h7v4.500z" fill="#2a2624"/>
<ellipse cx="-5.8" cy="-0.8" rx=".75" ry=".55" fill="#2a1a14"/><ellipse cx="-2.4" cy="-0.8" rx=".75" ry=".55" fill="#2a1a14"/><path d="M-5.3 2.6q1.3 1.4300000000000002 2.6 0z" fill="#fff"/></g><rect x="0" y="-12" width="12" height="12" fill="#a9d5ef"/><rect x="0" y="0" width="12" height="12" fill="#c3b0e2"/><rect x="-.6" y="-12" width="1.200" height="24" fill="#f5f5f5"/><rect x="0" y="-.6" width="12" height="1.200" fill="#f5f5f5"/><text x="5" y="-3.800" text-anchor="middle" font-family="Liberation Sans, sans-serif" font-size="5" fill="#2a3f8f">E</text><text x="5" y="7.200" text-anchor="middle" font-family="Liberation Sans, sans-serif" font-size="5" fill="#3b2a6b">K</text></g></g>
<g transform="translate(297 56.8)" ><g clip-path="url(#c13)"><rect x="-12" y="-12" width="24" height="24" fill="#8ccbe7"/>
<path d="M-.3 -6c.6 1.800 2.800 2.800 3.600 5.200c.6 -.6 .7 -1.300 .6 -2c1.500 1.700 2 4.200 .9 6.100c-1 1.800 -2.900 2.700 -4.900 2.600c-2.200 -.1 -4.100 -1.500 -4.600 -3.600c-.5 -2 .3 -3.700 1.500 -5c0 .8 .3 1.500 .9 1.900c-.1 -2.200 .6 -3.900 2 -5.200z" fill="#e8541e"/>
<path d="M-.1 -2.500c.5 1.300 2 2 2.300 3.700c.3 1.700 -.8 3.300 -2.400 3.400c-1.500 .1 -2.800 -1 -2.900 -2.500c-.1 -1.100 .5 -1.900 1.100 -2.500c.1 .5 .3 .8 .7 1c0 -1.300 .4 -2.300 1.200 -3.100z" fill="#f9a825"/>
<path d="M-.2 1.200c.5 .6 1.100 1.200 1 2.100c-.1 .8 -.6 1.300 -1.200 1.300c-.7 0 -1.300 -.6 -1.300 -1.400c0 -.8 .9 -1.200 1.500 -2z" fill="#ffe082"/></g></g>
<g transform="translate(305 168.5)" ><g clip-path="url(#c14)"><rect x="-12" y="-12" width="24" height="24" fill="#f4f3f1"/>
<g filter="url(#b1)">
<path d="M-12 -6l3 -3v16l-3 3z" fill="#8fa3a3"/>
<ellipse cx="0" cy="-2" rx="7" ry="8" fill="#1d1715"/>
<path d="M-7 -1c-1 5 -.5 8 1 11l3 -2z" fill="#1d1715"/>
<ellipse cx=".5" cy="1.600" rx="4.800" ry="5.800" fill="#e0ab96"/>
<path d="M-5 -2c2 -3 6 -4 10 -1l-1 -3h-8z" fill="#1d1715"/>
<path d="M-7 12c1 -3 3 -3.500 7 -3.500s6 .5 8 3.500z" fill="#efe9e6"/>
<ellipse cx="-1.6" cy="0.9" rx=".75" ry=".55" fill="#3a2620"/><ellipse cx="2.4" cy="0.9" rx=".75" ry=".55" fill="#3a2620"/><path d="M-1.0 3.9q1.5 1.6500000000000001 3 0z" fill="#fff"/></g></g><circle cx="7.8" cy="6.7" r="4.1000000000000005" fill="#ffffff"/><circle cx="7.8" cy="6.7" r="3.2" fill="#13a10e"/><path d="M6.3 6.8l1.1 1.1l2 -2.2" fill="none" stroke="#fff" stroke-width=".85" stroke-linecap="round" stroke-linejoin="round"/></g>
<g transform="translate(305.2 361.6)" ><g clip-path="url(#c15)"><rect x="-12" y="-12" width="24" height="24" fill="#8c4a2c"/>
<g filter="url(#b1)">
<rect x="-12" y="-6" width="4" height="12" fill="#c08a1a"/>
<ellipse cx="0" cy="-5" rx="7.500" ry="6" fill="#2a1712"/>
<ellipse cx="0" cy="1" rx="5.800" ry="7" fill="#b3775a"/>
<ellipse cx="0" cy="-7" rx="5" ry="2.500" fill="#2a1712"/>
<path d="M-9 12c1 -3 4 -4 9 -4s8 1 9 4z" fill="#7a6a66"/>
<path d="M-3 5.500c2 1.500 4 1.500 6 0l-1 2h-4z" fill="#e8d8d0"/>
<ellipse cx="-2.2" cy="-0.3" rx=".75" ry=".55" fill="#3a2620"/><ellipse cx="2.2" cy="-0.3" rx=".75" ry=".55" fill="#3a2620"/><path d="M-0.05 4.2q0.05 0.05500000000000001 0.1 0z" fill="#fff"/></g></g><circle cx="7.8" cy="6.7" r="4.1000000000000005" fill="#ffffff"/><circle cx="7.8" cy="6.7" r="3.2" fill="#13a10e"/><path d="M6.3 6.8l1.1 1.1l2 -2.2" fill="none" stroke="#fff" stroke-width=".85" stroke-linecap="round" stroke-linejoin="round"/></g>
<g transform="translate(305 407)" ><g clip-path="url(#c16)"><rect x="-12" y="-12" width="24" height="24" fill="#f4f3f1"/>
<g filter="url(#b1)">
<path d="M-12 -6l3 -3v16l-3 3z" fill="#8fa3a3"/>
<ellipse cx="0" cy="-2" rx="7" ry="8" fill="#1d1715"/>
<path d="M-7 -1c-1 5 -.5 8 1 11l3 -2z" fill="#1d1715"/>
<ellipse cx=".5" cy="1.600" rx="4.800" ry="5.800" fill="#e0ab96"/>
<path d="M-5 -2c2 -3 6 -4 10 -1l-1 -3h-8z" fill="#1d1715"/>
<path d="M-7 12c1 -3 3 -3.500 7 -3.500s6 .5 8 3.500z" fill="#efe9e6"/>
<ellipse cx="-1.6" cy="0.9" rx=".75" ry=".55" fill="#3a2620"/><ellipse cx="2.4" cy="0.9" rx=".75" ry=".55" fill="#3a2620"/><path d="M-1.0 3.9q1.5 1.6500000000000001 3 0z" fill="#fff"/></g></g><circle cx="7.8" cy="6.7" r="4.1000000000000005" fill="#ffffff"/><circle cx="7.8" cy="6.7" r="3.2" fill="#13a10e"/><path d="M6.3 6.8l1.1 1.1l2 -2.2" fill="none" stroke="#fff" stroke-width=".85" stroke-linecap="round" stroke-linejoin="round"/></g>
<g transform="translate(305 478.7)" ><g clip-path="url(#c17)"><rect x="-12" y="-12" width="24" height="24" fill="#6a6a6c"/>
<g filter="url(#b1)">
<path d="M-12 -3h8v8h-8z" fill="#f4f4f4"/>
<path d="M-12 3l8 -1l4 11h-12z" fill="#2f78ad"/>
<ellipse cx="1" cy="-2" rx="6.500" ry="7.500" fill="#4a2e22"/>
<ellipse cx="1.500" cy="1.500" rx="4.300" ry="5.200" fill="#e2b29c"/>
<path d="M-4 -2c2 -3 7 -4 11 -1l-1 -4h-9z" fill="#4a2e22"/>
<path d="M0 5l5 1l1 6h-6z" fill="#e8c4ae"/>
<path d="M5 4l7 -1v9h-6z" fill="#dfe7ea"/>
<ellipse cx="-0.2" cy="0.7" rx=".75" ry=".55" fill="#3a2620"/><ellipse cx="3.2" cy="0.7" rx=".75" ry=".55" fill="#3a2620"/><path d="M0.19999999999999996 3.7q1.3 1.4300000000000002 2.6 0z" fill="#fff"/></g></g><circle cx="7.8" cy="6.7" r="4.1000000000000005" fill="#ffffff"/><circle cx="7.8" cy="6.7" r="3.2" fill="#13a10e"/><path d="M6.3 6.8l1.1 1.1l2 -2.2" fill="none" stroke="#fff" stroke-width=".85" stroke-linecap="round" stroke-linejoin="round"/></g>
<g transform="translate(889 19.2)" ><g clip-path="url(#c18)"><rect x="-12" y="-12" width="24" height="24" fill="#d8b9a8"/>
<g filter="url(#b1)">
<rect x="-12" y="-12" width="24" height="8" fill="#e9d9cf"/>
<ellipse cx="0" cy="-1" rx="7.500" ry="8.500" fill="#b47a3c"/>
<path d="M-8 0c-1 5 0 9 2 12h12c2 -3 3 -7 2 -12z" fill="#a86c34"/>
<ellipse cx=".5" cy="-.5" rx="3.900" ry="5" fill="#e7b9a0"/>
<path d="M-4 -3c2 -3 6 -3.500 9 -1l-1 -3.500h-7z" fill="#c48c48"/>
<path d="M-5 12c1 -3 3 -3.500 5.500 -3.500s4.500 .5 5.500 3.500z" fill="#7c3a2a"/>
<ellipse cx="-1.2" cy="-1" rx=".75" ry=".55" fill="#5a3a2a"/><ellipse cx="2.2" cy="-1" rx=".75" ry=".55" fill="#5a3a2a"/><path d="M-0.7 2.2q1.2 1.32 2.4 0z" fill="#fff"/></g></g><circle cx="6" cy="6.3" r="3.9" fill="#e6e6e6"/><circle cx="6" cy="6.3" r="3" fill="#13a10e"/><path d="M4.5 6.3999999999999995l1.1 1.1l2 -2.2" fill="none" stroke="#fff" stroke-width=".85" stroke-linecap="round" stroke-linejoin="round"/></g>
<g transform="translate(77 96)" >
<path d="M-3.300 7.300l2.600 -8.500l3 .5l-1.500 8.800z" fill="#e2421e" stroke="#e2421e" stroke-width="1.600" stroke-linejoin="round"/>
<path d="M3.300 -7.500l-1.500 4.400l4.300 -.7z" fill="#1d3f9c" stroke="#1d3f9c" stroke-width="1.900" stroke-linejoin="round"/>
<path d="M-6.200 -7.500h8.200l-1.300 4.400l-2.600 8.400l-7.200 -1.500z" fill="url(#cpl)" stroke="url(#cpl)" stroke-width="2.600" stroke-linejoin="round"/>
<path d="M5.100 -3l4.100 .5l-2.800 9.900l-7.400 -.3l2 -4.500z" fill="url(#cpr)" stroke="url(#cpr)" stroke-width="2.600" stroke-linejoin="round"/>
<path d="M3.200 -5.400c-1.700 .3 -2.400 1.400 -2.900 3.100l-1.600 5.300c-.3 1.100 -.9 1.900 -1.800 2.300c1.900 .1 3.100 -.9 3.600 -2.600l1.700 -5.600c.2 -.9 .5 -1.800 1 -2.500z" fill="#fff" stroke="#fff" stroke-width=".5"/>
</g>
<g transform="translate(333 180)" ><g clip-path="url(#pc1)"><g filter="url(#pb)"><rect x="0" y="0" width="123.4" height="123.4" fill="#3f3f3f"/><polygon points="54.6,0 124,0 124,33.5 119,32.9 111.7,31 104.2,28.5 99.3,24.8 91.8,21.7 83.1,18.6 74.4,13.6 67,11.8 59.6,6.2 54.6,3.1" fill="#e3e3e3"/><polygon points="80,0 124,0 124,20 100,10" fill="#e3e3e3"/><polygon points="0,0 54,0 58,6 58,26 0,26" fill="#6c6c6c"/><polygon points="0,11.5 13.6,15 13.6,31 0,27" fill="#cccccc"/><polygon points="0,3.7 13.6,9.3 13.6,15 0,11.5" fill="#656565"/><rect x="2.5" y="6.5" width="3" height="4.5" fill="#1c1c1c"/><rect x="7" y="8" width="2.5" height="4.5" fill="#262626"/><rect x="3" y="18.6" width="4.4" height="5.4" fill="#2c2c2c"/><polygon points="0,0 6,0 16,5 16,9 0,3" fill="#3c3c3c"/><rect x="16" y="11" width="12.5" height="14" fill="#aaaaaa"/><rect x="15" y="12" width="4" height="4.5" fill="#262626"/><rect x="22" y="15" width="4" height="4" fill="#2c2c2c"/><rect x="29" y="17" width="4" height="4" fill="#262626"/><rect x="14" y="0" width="14" height="9" fill="#6f6f6f"/><rect x="14" y="1" width="3" height="4" fill="#262626"/><rect x="22.5" y="4.5" width="3" height="4.5" fill="#2f2f2f"/><rect x="28" y="0" width="16" height="11" fill="#7b7b7b"/><rect x="33" y="5" width="2" height="5" fill="#393939"/><rect x="37" y="5" width="2" height="5" fill="#393939"/><rect x="40" y="1" width="4" height="5" fill="#3f3f3f"/><rect x="28.5" y="11" width="9" height="14" fill="#4c4c4c"/><polygon points="13.6,20 37,24 37,34 13.6,30" fill="#767676"/><rect x="16.5" y="24" width="2.5" height="5" fill="#2c2c2c"/><rect x="21" y="27" width="4" height="5" fill="#363636"/><polygon points="46,4 60,6 67,12 67,20 46,20" fill="#707070"/><rect x="59.5" y="9" width="7.5" height="11" fill="#868686"/><rect x="51" y="8" width="3" height="4" fill="#323232"/><rect x="47" y="14" width="3" height="4" fill="#363636"/><polygon points="66,12 74.4,13.6 83,18.6 83,23 66,22" fill="#555555"/><polygon points="74.5,16 83,19.5 83,23 74.5,21" fill="#7e7e7e"/><polygon points="83,18.6 91.8,21.7 99.3,24.8 104.2,28.5 111.7,31 119,32.9 124,33.5 124,40 83,34" fill="#5e5e5e"/><rect x="86" y="24" width="5" height="5" fill="#8b8b8b"/><rect x="93" y="26" width="5" height="4" fill="#4c4c4c"/><rect x="99" y="28" width="4" height="4" fill="#7e7e7e"/><rect x="106" y="31" width="4" height="3" fill="#4c4c4c"/><ellipse cx="46" cy="31" rx="9" ry="9.5" fill="#1e1e1e"/><ellipse cx="40" cy="26" rx="4" ry="4" fill="#262626"/><ellipse cx="50" cy="39" rx="5" ry="4" fill="#232323"/><polygon points="54.6,21.5 70.5,20.5 70.5,37.5 54.6,37.5" fill="#656565"/><polygon points="70.5,20.5 79.4,22 79.4,37.5 70.5,37.5" fill="#717171"/><rect x="72.5" y="22" width="2" height="5.5" fill="#393939"/><rect x="72.3" y="30.5" width="2" height="4.5" fill="#363636"/><rect x="79.5" y="25" width="2.5" height="5" fill="#2c2c2c"/><rect x="79.5" y="34" width="2.5" height="4" fill="#2c2c2c"/><polygon points="80.6,33.5 119,33.5 119,42.2 80.6,42.2" fill="#343434"/><polygon points="82,35 108,36 108,41 82,41" fill="#3e3e3e"/><polygon points="0,30 37,37 41,41 41,45 0,38" fill="#2d2d2d"/><polygon points="14,29.5 36,33.5 36,38 14,33.5" fill="#3c3c3c"/><polygon points="0,38 41,45 41,57 0,57" fill="#515151"/><polygon points="12.5,40.3 41,45 41,57 12.5,57" fill="#6a6a6a"/><rect x="21" y="42.8" width="4.4" height="9.2" fill="#212121"/><rect x="0" y="38.5" width="2" height="9" fill="#262626"/><rect x="41" y="36.5" width="3" height="7.5" fill="#cccccc"/><polygon points="41,50 59.5,37.2 82,39.7 74.5,43.4 52,48.4" fill="#3a3a3a"/><polygon points="47,48.6 74.5,42.2 77,44 49.6,49.8" fill="#646464"/><polygon points="47,49.5 77,44.5 77,58 47,58" fill="#272727"/><rect x="58" y="47" width="11" height="10" fill="#3f3f3f"/><rect x="70" y="45.5" width="6.5" height="12.5" fill="#191919"/><polygon points="77,43.4 82,43.4 106.7,48.4 106.7,62 77,62" fill="#515151"/><rect x="100.5" y="51.5" width="3.5" height="5" fill="#232323"/><rect x="106.7" y="36" width="17.3" height="88" fill="#393939"/><polygon points="106.7,42 124,40 124,50 106.7,50" fill="#373737"/><rect x="115" y="43.5" width="4" height="4.5" fill="#989898"/><rect x="108.5" y="55" width="3.5" height="7" fill="#232323"/><rect x="113.5" y="55" width="3" height="7" fill="#262626"/><polygon points="0,57 41,52 47,54 47,62 0,62" fill="#272727"/><polygon points="0,58.5 22,55.5 22,57 0,60" fill="#4c4c4c"/><rect x="0" y="62" width="16" height="20" fill="#2d2d2d"/><rect x="5.5" y="62" width="6" height="11" fill="#181818"/><rect x="0" y="74" width="16" height="4" fill="#3c3c3c"/><polygon points="18,62 58,62 58,97 31,82 18,82" fill="#4c4c4c"/><polygon points="10.5,62 40,62 40,72 10.5,72" fill="#535353"/><polygon points="0,83 36,82 50,95.5 0,103" fill="#3f3f3f"/><polygon points="0,101.5 50,94.7 50,96.5 0,104.2" fill="#6c6c6c"/><polygon points="0,104.2 43.5,98 43.5,124 0,124" fill="#4e4e4e"/><rect x="20.5" y="106.5" width="9.5" height="12" fill="#212121"/><rect x="0" y="114" width="9" height="6" fill="#1c1c1c"/><rect x="44" y="98" width="5.5" height="26" fill="#1d1d1d"/><rect x="49.5" y="90" width="10" height="34" fill="#3f3f3f"/><rect x="59.5" y="90.5" width="5" height="13.5" fill="#818181"/><rect x="58" y="62" width="48.7" height="14" fill="#444444"/><rect x="64.5" y="63" width="6" height="12.5" fill="#1a1a1a"/><rect x="85" y="65" width="4.5" height="10" fill="#1c1c1c"/><rect x="101" y="66" width="3.5" height="10" fill="#1e1e1e"/><rect x="60" y="76" width="46.7" height="48" fill="#1d1d1d"/><rect x="72" y="78.5" width="31" height="5.5" fill="#4c4c4c"/><rect x="86" y="77.5" width="11" height="6.5" fill="#cccccc"/><rect x="91" y="78" width="1.5" height="6" fill="#454545"/><rect x="64" y="76" width="8" height="8" fill="#454545"/><rect x="60" y="86" width="46" height="4" fill="#2f2f2f"/><rect x="75.5" y="90" width="9" height="18" fill="#323232"/><rect x="86" y="90" width="4" height="18" fill="#3f3f3f"/><rect x="70" y="90" width="5" height="20" fill="#191919"/><rect x="91" y="89" width="4" height="20" fill="#181818"/><polygon points="60,110 106,103 106,108 60,115" fill="#343434"/><rect x="60" y="115" width="30" height="9" fill="#1a1a1a"/><rect x="90" y="108" width="17" height="16" fill="#272727"/><rect x="84" y="116" width="5" height="8" fill="#171717"/><rect x="107.5" y="62" width="2.5" height="8" fill="#1c1c1c"/><rect x="113.5" y="62" width="2.5" height="6" fill="#202020"/><rect x="110" y="90" width="3.5" height="11" fill="#1a1a1a"/><rect x="110" y="110" width="3.5" height="14" fill="#1a1a1a"/><rect x="116" y="64" width="8" height="60" fill="#363636"/><rect x="117" y="106" width="6" height="3" fill="#5e5e5e"/></g><rect width="123.4" height="123.4" filter="url(#nz)" opacity="0.28" style="mix-blend-mode:overlay"/></g></g>
<g transform="translate(458 180)" ><g clip-path="url(#pc2)"><g filter="url(#pb)"><rect x="0" y="0" width="123.4" height="123.4" fill="#767676"/><rect x="0" y="0" width="123.4" height="12" fill="#8a8a8a"/><rect x="0" y="10" width="123.4" height="22" fill="#949494"/><polygon points="74.4,16.1 124.1,12.4 124.1,22.3 99.3,23.0 80.6,26.7" fill="#a2a2a2"/><polygon points="64.5,30.4 74.4,28.3 86.8,24.8 99.3,23.1 111.7,22.3 124.1,21.8 124.1,40.9 116.6,42.8 64.5,49.6" fill="#464646"/><polygon points="74.4,32.3 94.3,28.5 111.7,29.8 121.6,37.2 86.8,43.4" fill="#4e4e4e"/><rect x="94.9" y="33.7" width="5.3" height="4.1" fill="#d7d7d7"/><rect x="74.4" y="43.4" width="5.6" height="5.0" fill="#d2d2d2"/><rect x="91.8" y="43.4" width="3.7" height="3.1" fill="#aaaaaa"/><polygon points="0.0,29.2 3.7,24.8 3.7,16.1 11.2,13.0 19.9,13.9 31.0,16.4 40.9,22.3 53.3,26.7 64.5,30.4 69.5,62.0 0.0,62.0" fill="#787878"/><polygon points="3.5,16.7 7.4,13.6 14.9,12.8 21.1,14.9 18.6,19.9 13.6,23.6 8.7,23.0 4.3,19.9" fill="#2a2a2a"/><polygon points="0.0,29.8 5.0,25.4 9.9,24.8 9.9,32.3 0.0,36.0" fill="#3c3c3c"/><rect x="16.7" y="16.7" width="5.6" height="8.1" fill="#d7d7d7"/><rect x="22.3" y="15.1" width="8.7" height="8.4" fill="#afafaf"/><rect x="25.4" y="16.7" width="4.3" height="5.6" fill="#787878"/><rect x="11.2" y="24.2" width="6.2" height="8.7" fill="#e1e1e1"/><rect x="33.5" y="23.0" width="6.8" height="8.1" fill="#d7d7d7"/><rect x="42.2" y="21.1" width="5.0" height="3.7" fill="#dcdcdc"/><rect x="45.9" y="27.3" width="7.4" height="7.4" fill="#cdcdcd"/><rect x="20.5" y="26.7" width="11.8" height="3.7" fill="#c8c8c8"/><rect x="39.7" y="29.8" width="5.6" height="4.3" fill="#bebebe"/><rect x="3.7" y="32.5" width="6.2" height="7.2" fill="#d7d7d7"/><rect x="0.0" y="36.0" width="4.3" height="8.7" fill="#bebebe"/><rect x="8.7" y="39.7" width="11.8" height="6.8" fill="#d7d7d7"/><rect x="14.9" y="32.5" width="5.6" height="7.2" fill="#aaaaaa"/><rect x="20.5" y="31.0" width="9.9" height="13.0" fill="#5f5f5f"/><rect x="33.5" y="36.0" width="6.8" height="7.4" fill="#e1e1e1"/><rect x="30.4" y="32.3" width="3.7" height="8.7" fill="#464646"/><rect x="42.2" y="34.7" width="7.4" height="6.2" fill="#3c3c3c"/><rect x="52.1" y="26.7" width="12.4" height="14.3" fill="#3a3a3a"/><rect x="67.0" y="29.2" width="7.4" height="6.8" fill="#cdcdcd" opacity="0.8"/><rect x="18.6" y="47.1" width="12.4" height="6.2" fill="#dcdcdc"/><rect x="0.0" y="46.5" width="12.4" height="8.1" fill="#5a5a5a"/><rect x="12.4" y="53.3" width="6.2" height="8.7" fill="#505050"/><rect x="31.0" y="43.4" width="31.0" height="6.2" fill="#8c8c8c"/><rect x="40.9" y="48.4" width="17.4" height="6.2" fill="#c3c3c3"/><rect x="31.0" y="49.6" width="9.9" height="12.4" fill="#969696"/><rect x="0.0" y="54.6" width="5.0" height="7.4" fill="#c8c8c8"/><rect x="5.0" y="54.6" width="7.4" height="7.4" fill="#969696"/><rect x="58.3" y="40.9" width="11.2" height="21.1" fill="#4b4b4b"/><rect x="69.5" y="48.4" width="17.4" height="13.6" fill="#555555"/><rect x="86.8" y="52.1" width="7.4" height="6.2" fill="#bebebe"/><rect x="86.8" y="42.2" width="16.1" height="9.9" fill="#5f5f5f"/><rect x="94.3" y="54.6" width="8.7" height="7.4" fill="#6e6e6e"/><polygon points="103.0,52.1 116.6,45.9 117.2,36.0 124.1,36.0 124.1,62.0 101.7,62.0" fill="#d4d4d4"/><polygon points="111.7,49.6 117.2,44.7 117.2,62.0 111.7,62.0" fill="#afafaf"/><rect x="0.0" y="62.0" width="11.2" height="39.7" fill="#a8a8a8"/><rect x="3.7" y="63.2" width="6.2" height="6.2" fill="#5a5a5a"/><rect x="3.7" y="73.2" width="5.6" height="6.2" fill="#505050"/><rect x="0.0" y="81.9" width="8.7" height="9.9" fill="#6e6e6e"/><rect x="0.0" y="91.8" width="8.7" height="9.9" fill="#bebebe"/><rect x="11.2" y="62.0" width="21.7" height="39.1" fill="#484848"/><rect x="11.2" y="70.7" width="21.7" height="2.0" fill="#969696"/><rect x="11.2" y="80.6" width="21.7" height="2.0" fill="#969696"/><rect x="11.2" y="89.9" width="21.7" height="2.0" fill="#969696"/><rect x="14.9" y="93.6" width="11.8" height="6.2" fill="#696969"/><rect x="32.5" y="67.0" width="9.9" height="34.1" fill="#a2a2a2"/><rect x="35.4" y="76.3" width="6.2" height="3.1" fill="#464646"/><rect x="35.4" y="68.8" width="1.9" height="3.7" fill="#505050"/><rect x="39.5" y="68.8" width="2.0" height="3.7" fill="#505050"/><rect x="36.6" y="92.4" width="3.1" height="6.8" fill="#5f5f5f"/><rect x="34.7" y="85.0" width="6.8" height="2.5" fill="#6e6e6e"/><rect x="32.5" y="62.0" width="9.9" height="5.0" fill="#787878"/><rect x="42.4" y="62.0" width="25.2" height="7.4" fill="#555555"/><rect x="54.6" y="64.5" width="13.0" height="5.0" fill="#969696"/><rect x="42.4" y="69.4" width="13.4" height="28.5" fill="#707070"/><rect x="55.8" y="69.4" width="11.8" height="26.1" fill="#878787"/><rect x="56.5" y="75.6" width="11.2" height="3.1" fill="#bebebe"/><rect x="56.5" y="87.4" width="9.9" height="7.4" fill="#b9b9b9"/><rect x="60.8" y="69.4" width="3.7" height="5.0" fill="#373737"/><rect x="61.4" y="79.4" width="3.7" height="7.4" fill="#373737"/><rect x="47.1" y="85.0" width="3.1" height="3.7" fill="#d7d7d7"/><rect x="67.6" y="62.0" width="9.3" height="37.2" fill="#2a2a2a"/><rect x="76.9" y="63.0" width="13.6" height="23.8" fill="#acacac"/><rect x="79.4" y="67.6" width="1.9" height="2.5" fill="#464646"/><rect x="83.1" y="67.6" width="1.9" height="2.5" fill="#464646"/><rect x="79.4" y="73.2" width="1.9" height="2.5" fill="#464646"/><rect x="83.1" y="73.2" width="1.9" height="2.5" fill="#464646"/><rect x="82.5" y="78.7" width="1.9" height="3.7" fill="#464646"/><rect x="90.6" y="62.0" width="8.7" height="32.3" fill="#343434"/><rect x="91.2" y="86.2" width="6.2" height="2.5" fill="#b9b9b9"/><rect x="99.3" y="62.0" width="24.8" height="38.5" fill="#cdcdcd"/><rect x="112.9" y="80.6" width="6.8" height="8.1" fill="#3c3c3c"/><rect x="109.2" y="75.0" width="3.1" height="5.6" fill="#5a5a5a"/><rect x="100.5" y="83.7" width="3.1" height="5.0" fill="#6e6e6e"/><rect x="119.1" y="76.9" width="5.0" height="2.5" fill="#787878"/><rect x="101.7" y="62.0" width="9.9" height="5.0" fill="#969696"/><rect x="116.6" y="84.3" width="7.4" height="14.9" fill="#aaaaaa"/><polygon points="0.0,101.7 11.2,102.9 32.3,99.2 52.1,102.9 52.1,111.6 40.9,124.0 0.0,124.0" fill="#343434"/><polygon points="37.2,99.2 69.5,95.5 74.4,102.9 49.6,111.6 40.9,109.1" fill="#464646"/><polygon points="40.9,124.0 52.1,114.1 69.5,106.7 86.8,104.2 86.8,114.1 74.4,124.0" fill="#585858"/><polygon points="49.6,115.3 58.3,111.6 58.3,113.5 49.6,117.2" fill="#c8c8c8"/><polygon points="74.4,99.2 91.8,98.0 91.8,104.2 74.4,105.4" fill="#828282"/><polygon points="75.7,101.7 91.8,102.9 91.8,104.8 75.7,103.6" fill="#c8c8c8"/><polygon points="86.8,99.2 124.1,98.0 124.1,124.0 85.6,124.0" fill="#707070"/><polygon points="91.8,102.9 105.5,106.7 119.1,114.1 119.1,120.3 106.7,116.6 93.1,109.1" fill="#303030"/><polygon points="98.0,91.8 103.0,88.7 105.5,93.0 105.5,99.2 101.7,99.2" fill="#3c3c3c"/><polygon points="86.8,109.1 94.3,109.1 99.3,124.0 86.8,124.0" fill="#cdcdcd"/><polygon points="105.5,98.0 124.1,99.2 124.1,106.7 111.7,104.2" fill="#afafaf"/><polygon points="99.3,116.6 119.1,121.6 119.1,124.0 99.3,124.0" fill="#b4b4b4"/><polygon points="116.6,99.2 124.1,100.5 124.1,111.6 119.1,109.1" fill="#464646"/></g><rect width="123.4" height="123.4" filter="url(#nz)" opacity="0.28" style="mix-blend-mode:overlay"/></g></g>
<g transform="translate(583.2 180)" ><g clip-path="url(#pc3)"><g filter="url(#pb)"><rect x="0" y="0" width="123.4" height="123.4" fill="#565656"/><rect x="0" y="0" width="123.4" height="14" fill="#626262"/><rect x="0" y="14" width="123.4" height="30" fill="#5a5a5a"/><polygon points="86.8,18.6 124.1,23.6 124.1,40.9 86.8,40.9 74.4,32.3" fill="#545454"/><polygon points="0.0,0.0 32.9,0.0 40.9,5.0 52.1,13.6 62.0,23.6 69.5,31.0 76.9,36.0 84.4,42.2 0.0,42.2" fill="#343434"/><polygon points="14.9,7.4 40.9,12.4 52.1,24.8 37.2,37.2 18.6,31.0" fill="#444444"/><polygon points="0.0,0.0 14.9,0.0 16.1,9.9 7.4,14.9 0.0,12.4" fill="#2a2a2a"/><rect x="21.1" y="12.4" width="8.7" height="3.1" fill="#b9b9b9"/><rect x="31.0" y="11.8" width="5.0" height="3.7" fill="#969696"/><rect x="25.4" y="19.9" width="3.7" height="2.5" fill="#bebebe"/><rect x="36.0" y="14.3" width="5.6" height="4.3" fill="#a0a0a0"/><rect x="12.4" y="18.6" width="12.4" height="18.6" fill="#2d2d2d"/><rect x="16.1" y="33.5" width="12.4" height="11.2" fill="#282828"/><rect x="38.5" y="31.0" width="4.3" height="6.2" fill="#323232"/><rect x="74.4" y="29.2" width="8.1" height="3.3" fill="#cdcdcd"/><rect x="91.2" y="28.8" width="5.0" height="1.5" fill="#bebebe"/><rect x="67.0" y="26.7" width="7.4" height="6.8" fill="#323232"/><rect x="53.3" y="28.5" width="3.7" height="3.7" fill="#aaaaaa"/><rect x="76.9" y="39.7" width="8.7" height="3.7" fill="#b4b4b4"/><rect x="19.9" y="17.4" width="5.0" height="1.7" fill="#787878"/><rect x="37.2" y="21.1" width="4.5" height="1.5" fill="#828282"/><rect x="44.7" y="24.8" width="3.7" height="1.5" fill="#737373"/><rect x="32.3" y="27.3" width="5.0" height="1.5" fill="#6e6e6e"/><rect x="47.1" y="32.3" width="5.0" height="1.7" fill="#787878"/><rect x="54.6" y="37.2" width="5.0" height="1.7" fill="#7d7d7d"/><rect x="24.8" y="7.4" width="5.0" height="1.5" fill="#5f5f5f"/><rect x="7.4" y="37.2" width="6.2" height="2.0" fill="#6e6e6e"/><rect x="31.0" y="37.2" width="6.2" height="1.7" fill="#787878"/><polygon points="0.0,37.2 24.8,36.0 52.1,40.9 76.9,38.5 86.8,45.9 124.1,44.7 124.1,62.0 0.0,62.0" fill="#545454"/><rect x="0.0" y="37.2" width="5.0" height="3.7" fill="#969696"/><rect x="5.0" y="40.9" width="11.2" height="4.3" fill="#7d7d7d"/><rect x="0.0" y="45.9" width="7.4" height="7.4" fill="#464646"/><rect x="29.8" y="43.4" width="16.1" height="3.7" fill="#a0a0a0"/><rect x="12.4" y="45.9" width="12.4" height="3.7" fill="#9b9b9b"/><rect x="22.3" y="49.6" width="14.9" height="6.2" fill="#969696"/><rect x="7.4" y="52.1" width="14.9" height="9.9" fill="#4b4b4b"/><rect x="40.9" y="42.2" width="11.2" height="7.4" fill="#6e6e6e"/><rect x="52.1" y="44.7" width="13.6" height="7.4" fill="#b9b9b9"/><rect x="47.1" y="52.1" width="11.2" height="6.2" fill="#5a5a5a"/><rect x="58.3" y="50.9" width="16.1" height="5.6" fill="#878787"/><rect x="67.0" y="45.9" width="7.4" height="8.7" fill="#505050"/><rect x="74.4" y="47.1" width="9.9" height="5.0" fill="#aaaaaa"/><rect x="84.4" y="49.6" width="9.9" height="6.2" fill="#6e6e6e"/><rect x="93.1" y="48.4" width="9.9" height="5.0" fill="#b9b9b9"/><rect x="98.0" y="45.9" width="8.7" height="3.1" fill="#c8c8c8"/><rect x="106.7" y="44.7" width="17.4" height="8.7" fill="#3c3c3c"/><rect x="111.7" y="52.7" width="9.9" height="3.7" fill="#bebebe"/><rect x="103.0" y="54.6" width="11.2" height="7.4" fill="#555555"/><rect x="81.9" y="54.6" width="12.4" height="7.4" fill="#7d7d7d"/><rect x="94.3" y="55.8" width="8.7" height="6.2" fill="#646464"/><rect x="37.2" y="55.8" width="14.9" height="6.2" fill="#787878"/><rect x="52.1" y="58.3" width="17.4" height="3.7" fill="#969696"/><rect x="69.5" y="56.5" width="12.4" height="5.6" fill="#696969"/><rect x="116.6" y="56.5" width="7.4" height="5.6" fill="#6e6e6e"/><polygon points="0.0,62.0 16.1,67.0 32.3,84.3 52.1,94.3 64.5,115.3 74.4,124.0 0.0,124.0" fill="#444444"/><polygon points="0.0,69.4 14.9,81.9 24.8,101.7 7.4,111.6 0.0,99.2" fill="#565656"/><polygon points="0.0,62.0 12.4,62.0 17.4,69.4 7.4,70.7" fill="#373737"/><rect x="11.2" y="62.0" width="5.6" height="5.6" fill="#cdcdcd"/><rect x="17.4" y="62.0" width="14.9" height="7.4" fill="#464646"/><polygon points="16.1,68.2 32.3,73.2 40.9,85.6 31.0,86.8" fill="#343434"/><rect x="32.3" y="66.3" width="10.5" height="9.3" fill="#d0d0d0"/><rect x="42.8" y="68.8" width="3.7" height="8.1" fill="#969696"/><rect x="46.5" y="65.7" width="8.1" height="9.9" fill="#a5a5a5"/><rect x="51.5" y="62.0" width="3.1" height="13.6" fill="#cdcdcd"/><rect x="31.6" y="72.5" width="8.1" height="5.6" fill="#c3c3c3"/><rect x="41.6" y="76.3" width="11.8" height="6.2" fill="#cdcdcd"/><rect x="43.4" y="82.5" width="6.2" height="4.3" fill="#8c8c8c"/><rect x="54.6" y="62.0" width="19.9" height="7.4" fill="#555555"/><rect x="54.6" y="69.4" width="9.9" height="7.4" fill="#787878"/><polygon points="28.5,86.8 39.7,85.6 40.9,102.9 37.2,119.1 29.8,120.3 28.5,102.9" fill="#2d2d2d"/><rect x="0.0" y="111.6" width="16.1" height="12.4" fill="#323232"/><rect x="37.2" y="109.1" width="9.9" height="11.2" fill="#323232"/><ellipse cx="58" cy="85" rx="7.5" ry="9" fill="#2c2c2c"/><ellipse cx="61" cy="72" rx="5" ry="4" fill="#323232"/><polygon points="67.0,78.1 76.9,76.9 99.3,88.7 104.2,99.2 103.0,117.8 79.4,116.6 74.4,104.2 67.0,90.5" fill="#505050"/><polygon points="65.8,77.5 76.9,76.6 74.4,80.6 67.6,83.1" fill="#a0a0a0"/><polygon points="74.4,62.0 119.1,62.0 119.1,78.1 103.0,85.6 74.4,73.2" fill="#585858"/><rect x="79.4" y="63.2" width="11.2" height="6.2" fill="#787878"/><rect x="90.6" y="65.7" width="12.4" height="8.7" fill="#696969"/><rect x="99.3" y="67.0" width="16.1" height="5.0" fill="#b9b9b9"/><rect x="85.6" y="62.0" width="8.7" height="3.1" fill="#c8c8c8"/><rect x="105.5" y="62.0" width="5.0" height="3.7" fill="#c8c8c8"/><rect x="115.4" y="65.7" width="8.7" height="11.2" fill="#969696"/><polygon points="74.4,69.4 101.7,83.1 101.7,86.8 74.4,74.4" fill="#303030"/><polygon points="101.7,85.6 124.1,76.9 124.1,124.0 99.3,124.0 104.2,99.2" fill="#444444"/><rect x="115.4" y="88.1" width="5.6" height="11.2" fill="#bebebe"/><rect x="101.7" y="88.7" width="5.0" height="3.7" fill="#aaaaaa"/><rect x="119.1" y="76.9" width="5.0" height="7.4" fill="#afafaf"/><rect x="105.5" y="99.2" width="6.2" height="3.7" fill="#969696"/><rect x="109.2" y="102.9" width="14.9" height="12.4" fill="#323232"/><polygon points="55.8,99.2 65.8,96.7 74.4,104.8 58.3,106.7" fill="#d0d0d0"/><polygon points="55.8,102.9 73.2,105.4 73.2,107.9 55.8,106.0" fill="#969696"/><ellipse cx="67.5" cy="111" rx="4.5" ry="5.5" fill="#282828"/><rect x="70.7" y="98.0" width="9.9" height="1.2" fill="#aaaaaa"/><polygon points="64.5,115.3 103.0,117.8 103.0,124.0 74.4,124.0" fill="#3e3e3e"/></g><rect width="123.4" height="123.4" filter="url(#nz)" opacity="0.28" style="mix-blend-mode:overlay"/></g></g>
<g transform="translate(757.6 297.5)" ><circle r="8.8" fill="url(#eg)"/><ellipse cx="-3.2" cy="-2.2" rx="2.5" ry="2.9" fill="#fff"/><circle cx="-3.2" cy="-2.1" r="1.6" fill="#2b1a14"/><ellipse cx="3.2" cy="-2.2" rx="2.5" ry="2.9" fill="#fff"/><circle cx="3.2" cy="-2.1" r="1.6" fill="#2b1a14"/><path d="M-2.3 2.8q2.3 3.0 4.6 0" fill="none" stroke="#4a2a1c" stroke-width="0.9" stroke-linecap="round"/></g>
<g transform="translate(789.5 297.5)" ><circle r="8.8" fill="url(#eg)"/><ellipse cx="-3.2" cy="2.5" rx="2.5" ry="2.7" fill="#fff"/><circle cx="-3.2" cy="2.5" r="1.6" fill="#2b1a14"/><ellipse cx="3.2" cy="2.5" rx="2.5" ry="2.7" fill="#fff"/><circle cx="3.2" cy="2.5" r="1.6" fill="#2b1a14"/><path d="M-2.600 -3.200q2.600 -3.200 5.200 0" fill="none" stroke="#4a2a1c" stroke-width="1" stroke-linecap="round"/></g>
<g transform="translate(821.2 297.5)" ><circle r="8.8" fill="url(#eg)"/><ellipse cx="-3.300" cy="-1.600" rx="2.400" ry="2.700" fill="#fff"/><circle cx="-3.100" cy="-1.400" r="1.500" fill="#2b1a14"/><path d="M5.600 -4.600l-3.200 1.400l3 1.100" fill="none" stroke="#4a2a1c" stroke-width=".95" stroke-linecap="round" stroke-linejoin="round"/><path d="M-4.600 2.400c3 .8 6.200 .5 9 -.8c.2 3.800 -1.800 6.200 -4.600 6.200c-2.600 0 -4.400 -2.200 -4.400 -5.400z" fill="#8a1c2c"/><path d="M-4.200 2.600c2.800 .7 5.800 .4 8.300 -.7l-.2 1.500c-2.600 1 -5.400 1.200 -7.900 .6z" fill="#fff"/><path d="M-2.400 6.200a2.800 1.900 0 0 1 4.600 -.6a4 4 0 0 1 -4.600 .6z" fill="#f0506e"/></g>
<g transform="translate(853 297.5)" ><circle r="8.8" fill="url(#eg)"/><path d="M-5.199999999999999 -1.6q1.9 -2.4 3.8 0" fill="none" stroke="#4a2a1c" stroke-width="1.05" stroke-linecap="round"/><path d="M1.4 -1.6q1.9 -2.4 3.8 0" fill="none" stroke="#4a2a1c" stroke-width="1.05" stroke-linecap="round"/><path d="M-3.4 2.4q3.4 4.2 6.8 0" fill="none" stroke="#4a2a1c" stroke-width="1.0" stroke-linecap="round"/><ellipse cx="-5.200" cy="2.500" rx="1.700" ry="1.100" fill="#f2705a" opacity=".55"/><ellipse cx="5.200" cy="2.500" rx="1.700" ry="1.100" fill="#f2705a" opacity=".55"/></g>
<g transform="translate(884.5 298.1)" ><circle r="8.6" fill="url(#eg)"/><path d="M-4.9 -1.0q1.8 -2.4 3.6 0" fill="none" stroke="#4a2a1c" stroke-width="1.05" stroke-linecap="round"/><path d="M1.3 -1.0q1.8 -2.4 3.6 0" fill="none" stroke="#4a2a1c" stroke-width="1.05" stroke-linecap="round"/><path d="M-2.5 2.6q2.5 3.8 5.0 0" fill="none" stroke="#4a2a1c" stroke-width="1.0" stroke-linecap="round"/><ellipse cx="0" cy="-8" rx="7.400" ry="1.900" fill="#f7c83a" stroke="#3f78dc" stroke-width="1.600"/></g>
<g transform="translate(916.4 297.5)" ><circle r="8.6" fill="url(#eg)"/><path d="M-4.8 -1.4q1.8 -2.4 3.6 0" fill="none" stroke="#4a2a1c" stroke-width="1.05" stroke-linecap="round"/><path d="M1.2 -1.4q1.8 -2.4 3.6 0" fill="none" stroke="#4a2a1c" stroke-width="1.05" stroke-linecap="round"/><path d="M-2.4 2.2q2.4 4 4.8 0" fill="none" stroke="#4a2a1c" stroke-width="1.0" stroke-linecap="round"/><path transform="translate(-6.6 -6.4) scale(0.95)" d="M0 2.2c-2.600 -1.700 -3.200 -3 -2.600 -4.100c.6 -1 2 -.9 2.600 .1c.6 -1 2 -1.100 2.600 -.1c.6 1.100 0 2.400 -2.600 4.100z" fill="#dc2a48"/><path transform="translate(7.2 3.4) scale(0.95)" d="M0 2.2c-2.600 -1.700 -3.200 -3 -2.600 -4.100c.6 -1 2 -.9 2.600 .1c.6 -1 2 -1.100 2.600 -.1c.6 1.100 0 2.400 -2.600 4.100z" fill="#dc2a48"/><path transform="translate(-6 6.2) scale(0.7)" d="M0 2.2c-2.600 -1.700 -3.200 -3 -2.600 -4.100c.6 -1 2 -.9 2.600 .1c.6 -1 2 -1.100 2.600 -.1c.6 1.100 0 2.400 -2.600 4.100z" fill="#dc2a48"/></g>
<g transform="translate(757.6 329)" ><circle r="8.8" fill="url(#eg)"/><path d="M-2.3 4q2.3 3.0 4.6 0" fill="none" stroke="#4a2a1c" stroke-width="0.9" stroke-linecap="round"/><path d="M-9.600 -4.400c3 -.9 6.500 -.9 9.600 .2c3.100 -1.100 6.600 -1.100 9.600 -.2l-.3 1.600c-.5 3.600 -2.200 5.400 -4.700 5.400c-2.300 0 -3.900 -1.700 -4.300 -4.400l-.3 -.1l-.3 .1c-.4 2.700 -2 4.400 -4.300 4.400c-2.500 0 -4.200 -1.800 -4.700 -5.400z" fill="#241a55"/><path d="M-7.400 -3.200l2.200 -.2l-1.800 2.400z" fill="#6a62b0" opacity=".8"/><path d="M2.400 -3.400l2.200 .2l-1.900 2.300z" fill="#6a62b0" opacity=".8"/></g>
<g transform="translate(789.5 329.4)" ><circle cx="-7" cy="-1" r="2.600" fill="#6b4636"/><circle cx="7" cy="-1" r="2.600" fill="#6b4636"/><circle cx="0" cy="-1" r="7.600" fill="url(#mg)"/><ellipse cx="0" cy="1" rx="5.400" ry="5" fill="#d9a68c"/><path d="M-8.500 5.500c1 -4.500 3.500 -6.500 6 -6.500l1.500 6.500c-2 2.500 -6 2.500 -7.500 0z" fill="#7a5040"/><path d="M8.500 5.500c-1 -4.500 -3.500 -6.500 -6 -6.500l-1.500 6.500c2 2.500 6 2.500 7.500 0z" fill="#7a5040"/><path d="M-6 -1.500c1.500 -2 4 -2.500 6 -1c2 -1.500 4.500 -1 6 1c-1 2.500 -3.500 3.200 -6 1.500c-2.500 1.700 -5 1 -6 -1.500z" fill="#c99079"/><ellipse cx="0" cy="4.800" rx="2" ry=".8" fill="#5a3426"/></g>
<g transform="translate(821.2 329)" ><circle r="8.8" fill="url(#eg)"/><path d="M-5.600 -3.200q2.400 -1.800 4.600 -.2" fill="none" stroke="#4a2a1c" stroke-width=".9" stroke-linecap="round"/><path d="M5.600 -3.200q-2.400 -1.800 -4.600 -.2" fill="none" stroke="#4a2a1c" stroke-width=".9" stroke-linecap="round"/><path d="M-5 -.3a2 1.900 0 0 0 4 0z" fill="#fff"/><path d="M1 -.3a2 1.900 0 0 0 4 0z" fill="#fff"/><circle cx="-2.600" cy=".4" r=".85" fill="#2b1a14"/><circle cx="3.400" cy=".4" r=".85" fill="#2b1a14"/><path d="M-5.200 -.4h4.400M.8 -.4h4.400" stroke="#4a2a1c" stroke-width=".8" stroke-linecap="round"/><path d="M-2.400 5.600q2.400 -2.400 4.800 0" fill="none" stroke="#4a2a1c" stroke-width="1" stroke-linecap="round"/></g>
<g transform="translate(853 329)" ><circle r="8.8" fill="url(#eg)"/><ellipse cx="-3.300" cy="-1.400" rx="2.900" ry="3.100" fill="#fff"/><circle cx="-3.300" cy="-1" r="1.300" fill="#2b1a14"/><ellipse cx="3.400" cy="-3.400" rx="2" ry="2.100" fill="#fff"/><circle cx="3.600" cy="-3.400" r=".95" fill="#2b1a14"/><path d="M-4.600 2.800c3 1 6.400 .2 8.600 -2c.8 4 -1 7.200 -4.200 7.400c-2.600 .2 -4.400 -2.200 -4.400 -5.400z" fill="#8a1c2c"/><path d="M-3.400 4.600c2.400 .2 4.800 -.6 6.200 -2c.6 3 -.6 5.400 -2.800 5.600c-2 .2 -3.200 -1.400 -3.400 -3.600z" fill="#f0506e"/></g>
<g transform="translate(884.5 329)" ><circle r="8.8" fill="url(#eg)"/><path d="M-5.600 -3.200q2 -2.200 4.200 -.6" fill="none" stroke="#4a2a1c" stroke-width=".95" stroke-linecap="round"/><path d="M5.800 -2q-1.600 -2.400 -4 -1.200" fill="none" stroke="#4a2a1c" stroke-width=".95" stroke-linecap="round"/><ellipse cx=".8" cy="3.400" rx="2.800" ry="4" fill="#8a1c2c"/><ellipse cx="1" cy="5.200" rx="1.800" ry="2" fill="#e8405a"/><path d="M-4.200 2.200c1.200 -1.600 3.200 -1.400 3.600 .4c.5 2.200 -.4 5.200 -1.800 6.400c-2.200 -.4 -4 -2 -4.600 -3.800c.6 -1.400 1.800 -2.200 2.800 -3z" fill="#f9a02c" stroke="#e07820" stroke-width=".4"/></g>
<g transform="translate(916 329)" ><circle r="8.8" fill="url(#eg)"/><ellipse cx="-3" cy="-2" rx="2.200" ry="2.500" fill="#fff"/><circle cx="-3" cy="-1.800" r="1.100" fill="#2b1a14"/><ellipse cx="3" cy="-2" rx="2.200" ry="2.500" fill="#fff"/><circle cx="3" cy="-1.800" r="1.100" fill="#2b1a14"/><path d="M-5 3.200h10" stroke="#6a3a2a" stroke-width=".7"/><path d="M-5 2.200l1.250 2l1.250 -2l1.250 2l1.250 -2l1.250 2l1.250 -2l1.250 2l1.250 -2" fill="none" stroke="#fff" stroke-width=".8" stroke-linejoin="round"/><path d="M4.800 3.600l2.800 3.600" stroke="#c9b8e6" stroke-width="1.200" stroke-linecap="round"/><ellipse cx="8" cy="8" rx="1.600" ry="2" transform="rotate(-35 8 8)" fill="#c9b8e6"/></g>
<g transform="translate(100.6 380.3)" ><circle r="3.700" fill="url(#eg)"/><path d="M-2.200 .4h4.400a2.200 2.200 0 0 1 -4.400 0z" fill="#6a2a1c"/><path d="M-2.600 -1.200l1.300 -.7M2.600 -1.200l-1.300 -.7" stroke="#4a2a1c" stroke-width=".6" stroke-linecap="round"/><circle cx="-3" cy=".6" r=".9" fill="#5ab4e8"/><circle cx="3" cy=".6" r=".9" fill="#5ab4e8"/></g>
<g transform="translate(108.7 380.3)" ><circle r="3.700" fill="url(#eg)"/><path d="M-2.200 .4h4.400a2.200 2.200 0 0 1 -4.400 0z" fill="#6a2a1c"/><path d="M-2.600 -1.200l1.300 -.7M2.600 -1.200l-1.300 -.7" stroke="#4a2a1c" stroke-width=".6" stroke-linecap="round"/><circle cx="-3" cy=".6" r=".9" fill="#5ab4e8"/><circle cx="3" cy=".6" r=".9" fill="#5ab4e8"/></g>
<g transform="translate(344.2 318.7)" ><path transform="translate(0 0.3) scale(2.0)" d="M0 2.2c-2.600 -1.700 -3.200 -3 -2.600 -4.100c.6 -1 2 -.9 2.600 .1c.6 -1 2 -1.100 2.600 -.1c.6 1.100 0 2.400 -2.600 4.100z" fill="#dc2a48"/></g></svg>
<div id="tx">
<span class="t" id="t0" style="top:14.01px;font-size:8.6px;line-height:11.18px;color:#616161;letter-spacing:0.053px;left:366px;">Search</span>
<span class="t" id="t1" style="top:62.81px;font-size:6.6px;line-height:8.58px;color:#616161;left:-70.8px;width:200px;text-align:center;">Activity</span>
<span class="t" id="t2" style="top:101.31px;font-size:6.6px;line-height:8.58px;color:#5b5fc7;left:-70.8px;width:200px;text-align:center;">Chat</span>
<span class="t" id="t3" style="top:139.81px;font-size:6.6px;line-height:8.58px;color:#616161;left:-70.8px;width:200px;text-align:center;">Teams</span>
<span class="t" id="t4" style="top:178.31px;font-size:6.6px;line-height:8.58px;color:#616161;left:-70.8px;width:200px;text-align:center;">Calendar</span>
<span class="t" id="t5" style="top:216.81px;font-size:6.6px;line-height:8.58px;color:#616161;left:-70.8px;width:200px;text-align:center;">Calls</span>
<span class="t" id="t6" style="top:255.31px;font-size:6.6px;line-height:8.58px;color:#616161;left:-70.8px;width:200px;text-align:center;">OneDrive</span>
<span class="t" id="t7" style="top:332.31px;font-size:6.6px;line-height:8.58px;color:#616161;left:-70.8px;width:200px;text-align:center;">Apps</span>
<span class="t" id="t8" style="top:50.27px;font-size:12.2px;line-height:15.86px;color:#242424;font-weight:700;letter-spacing:-0.098px;left:66.2px;">Chat</span>
<span class="t" id="t9" style="top:91.06px;font-size:9.6px;line-height:12.48px;color:#242424;letter-spacing:0.104px;left:96.5px;">Copilot</span>
<span class="t" id="t10" style="top:126.53px;font-size:7.8px;line-height:10.14px;color:#616161;letter-spacing:0.044px;left:66.5px;">Pinned</span>
<span class="t" id="t11" style="top:313.83px;font-size:7.8px;line-height:10.14px;color:#616161;letter-spacing:-0.044px;left:66.5px;">Recent</span>
<span class="t" id="t12" style="top:144.08px;font-size:9.1px;line-height:11.83px;color:#242424;letter-spacing:-0.151px;left:96.6px;">Ray Tanaka</span>
<span class="t" id="t13" style="top:155.73px;font-size:7.8px;line-height:10.14px;color:#616161;letter-spacing:0.146px;left:96.6px;">Louisa will send the initial list of...</span>
<span class="t" id="t14" style="top:144.93px;font-size:7.8px;line-height:10.14px;color:#616161;letter-spacing:-0.041px;right:741.541px;">1:47 PM</span>
<span class="t" id="t15" style="top:177.08px;font-size:9.1px;line-height:11.83px;color:#242424;letter-spacing:0.017px;left:96.6px;">Beth Davies</span>
<span class="t" id="t16" style="top:188.73px;font-size:7.8px;line-height:10.14px;color:#616161;letter-spacing:0.134px;left:96.6px;">Thanks, that would be nice.</span>
<span class="t" id="t17" style="top:177.93px;font-size:7.8px;line-height:10.14px;color:#616161;letter-spacing:-0.041px;right:741.541px;">1:43 PM</span>
<span class="t" id="t18" style="top:210.08px;font-size:9.1px;line-height:11.83px;color:#242424;letter-spacing:0.164px;left:96.6px;">Kayo Miwa</span>
<span class="t" id="t19" style="top:221.73px;font-size:7.8px;line-height:10.14px;color:#616161;letter-spacing:0.170px;left:96.6px;">I reviewed with the client on Th...</span>
<span class="t" id="t20" style="top:210.93px;font-size:7.8px;line-height:10.14px;color:#616161;letter-spacing:0.026px;right:741.474px;">Yesterday</span>
<span class="t" id="t21" style="top:243.19px;font-size:9.1px;line-height:11.83px;color:#242424;letter-spacing:0.219px;left:96.6px;">Dream team</span>
<span class="t" id="t22" style="top:254.83px;font-size:7.8px;line-height:10.14px;color:#616161;letter-spacing:0.062px;left:96.6px;">Erika: Happy to have you back,...</span>
<span class="t" id="t23" style="top:244.03px;font-size:7.8px;line-height:10.14px;color:#616161;letter-spacing:0.218px;right:741.282px;">11:32 AM</span>
<span class="t" id="t24" style="top:276.28px;font-size:9.1px;line-height:11.83px;color:#242424;font-weight:700;letter-spacing:0.156px;left:96.6px;">August Bergman</span>
<span class="t" id="t25" style="top:287.93px;font-size:7.8px;line-height:10.14px;color:#242424;font-weight:700;letter-spacing:0.013px;left:96.6px;">I haven't checked available tim...</span>
<span class="t" id="t26" style="top:277.13px;font-size:7.8px;line-height:10.14px;color:#616161;letter-spacing:0.218px;right:741.282px;">11:18 AM</span>
<span class="t" id="t27" style="top:331.29px;font-size:9.1px;line-height:11.83px;color:#242424;letter-spacing:0.154px;left:96.6px;">Charlotte and Babak</span>
<span class="t" id="t28" style="top:343.33px;font-size:7.8px;line-height:10.14px;color:#616161;letter-spacing:0.100px;left:96.6px;">Babak: I asked the client to send...</span>
<span class="t" id="t29" style="top:332.13px;font-size:7.8px;line-height:10.14px;color:#616161;letter-spacing:-0.041px;right:741.541px;">1:58 PM</span>
<span class="t" id="t30" style="top:364.29px;font-size:9.1px;line-height:11.83px;color:#242424;font-weight:700;letter-spacing:0.061px;left:96.6px;">Emiliano Ceballos</span>
<span class="t" id="t31" style="top:365.13px;font-size:7.8px;line-height:10.14px;color:#616161;letter-spacing:-0.041px;right:741.541px;">1:55 PM</span>
<span class="t" id="t32" style="top:397.29px;font-size:9.1px;line-height:11.83px;color:#242424;letter-spacing:0.224px;left:96.6px;">Marie Beaudouin</span>
<span class="t" id="t33" style="top:409.33px;font-size:7.8px;line-height:10.14px;color:#616161;letter-spacing:0.113px;left:96.6px;">Ohhh I see, yes let me fix that!</span>
<span class="t" id="t34" style="top:398.13px;font-size:7.8px;line-height:10.14px;color:#616161;letter-spacing:0.218px;right:741.282px;">11:32 AM</span>
<span class="t" id="t35" style="top:430.29px;font-size:9.1px;line-height:11.83px;color:#242424;letter-spacing:0.075px;left:96.6px;">Oscar Krogh</span>
<span class="t" id="t36" style="top:442.33px;font-size:7.8px;line-height:10.14px;color:#616161;letter-spacing:0.040px;left:96.6px;">You: Thanks! Have a nice day, I...</span>
<span class="t" id="t37" style="top:431.13px;font-size:7.8px;line-height:10.14px;color:#616161;letter-spacing:0.218px;right:741.282px;">11:02 AM</span>
<span class="t" id="t38" style="top:463.29px;font-size:9.1px;line-height:11.83px;color:#242424;letter-spacing:0.222px;left:96.6px;">Marketing team sync</span>
<span class="t" id="t39" style="top:475.33px;font-size:7.8px;line-height:10.14px;color:#616161;letter-spacing:0.132px;left:96.6px;">Kayo: So glad to hear that the r...</span>
<span class="t" id="t40" style="top:464.13px;font-size:7.8px;line-height:10.14px;color:#616161;letter-spacing:0.135px;right:741.365px;">10:43 AM</span>
<span class="t" id="t41" style="top:496.29px;font-size:9.1px;line-height:11.83px;color:#242424;letter-spacing:0.110px;left:96.6px;">Kian Lambert</span>
<span class="t" id="t42" style="top:508.33px;font-size:7.8px;line-height:10.14px;color:#616161;letter-spacing:0.118px;left:96.6px;">Have you run this by Beth? Mak...</span>
<span class="t" id="t43" style="top:497.13px;font-size:7.8px;line-height:10.14px;color:#616161;letter-spacing:0.026px;right:741.474px;">Yesterday</span>
<span class="t" id="t44" style="top:529.29px;font-size:9.1px;line-height:11.83px;color:#242424;letter-spacing:0.129px;left:96.6px;">Team Design Template</span>
<span class="t" id="t45" style="top:541.33px;font-size:7.8px;line-height:10.14px;color:#616161;letter-spacing:0.089px;left:96.6px;">Reta: Let's set up a brainstormi...</span>
<span class="t" id="t46" style="top:530.13px;font-size:7.8px;line-height:10.14px;color:#616161;letter-spacing:0.026px;right:741.474px;">Yesterday</span>
<span class="t" id="t47" style="top:49.23px;font-size:11.8px;line-height:15.34px;color:#242424;font-weight:700;letter-spacing:0.339px;left:316.7px;">Dream team</span>
<span class="t" id="t48" style="top:52.29px;font-size:9.4px;line-height:12.22px;color:#242424;letter-spacing:-0.038px;left:418.7px;">Chat</span>
<span class="t" id="t49" style="top:52.29px;font-size:9.4px;line-height:12.22px;color:#616161;letter-spacing:-0.287px;left:450.4px;">Shared</span>
<span class="t" id="t50" style="top:51.09px;font-size:9.4px;line-height:12.22px;color:#242424;letter-spacing:0.349px;left:811.6px;">Meet now</span>
<span class="t" id="t51" style="top:51.09px;font-size:9.4px;line-height:12.22px;color:#242424;left:897.6px;">7</span>
<span class="t" id="t52" style="top:90.99px;font-size:9.4px;line-height:12.22px;color:#242424;letter-spacing:0.006px;left:846.5px;">Welcome back Kayo!</span>
<span class="t" id="t53" style="top:117.29px;font-size:9.4px;line-height:12.22px;color:#242424;letter-spacing:0.129px;left:799.2px;">Any cool sights from your trip??</span>
<span class="t" id="t54" style="top:144.59px;font-size:7.7px;line-height:10.01px;color:#616161;letter-spacing:0.174px;left:322px;">Kayo Miwa</span>
<span class="t" id="t55" style="top:144.59px;font-size:7.7px;line-height:10.01px;color:#616161;letter-spacing:0.214px;left:367.5px;">9:05 AM</span>
<span class="t" id="t56" style="top:162.99px;font-size:9.4px;line-height:12.22px;color:#242424;letter-spacing:0.080px;left:333px;">Yes!! We went to Cinque Terre, I absolutely loved the colorful buildings.</span>
<span class="t" id="t57" style="top:314.59px;font-size:7.4px;line-height:9.62px;color:#616161;left:352px;">4</span>
<span class="t" id="t58" style="top:338.6px;font-size:7.7px;line-height:10.01px;color:#616161;letter-spacing:0.223px;left:322px;">Will Little</span>
<span class="t" id="t59" style="top:338.6px;font-size:7.7px;line-height:10.01px;color:#616161;letter-spacing:0.297px;left:361.5px;">9:06 AM</span>
<span class="t" id="t60" style="top:357.65px;font-size:9px;line-height:11.7px;color:#4f52b2;font-weight:700;letter-spacing:-0.172px;left:333.3px;">Kayo</span>
<span class="t" id="t61" style="top:357.39px;font-size:9.4px;line-height:12.22px;color:#242424;letter-spacing:0.124px;left:358px;">that looks so fun!</span>
<span class="t" id="t62" style="top:383.6px;font-size:7.7px;line-height:10.01px;color:#616161;letter-spacing:0.174px;left:322px;">Kayo Miwa</span>
<span class="t" id="t63" style="top:383.6px;font-size:7.7px;line-height:10.01px;color:#616161;letter-spacing:0.214px;left:367px;">9:06 AM</span>
<span class="t" id="t64" style="top:402.09px;font-size:9.4px;line-height:12.22px;color:#242424;letter-spacing:0.118px;left:333px;">It was! We were able to hike through the first four cities.</span>
<span class="t" id="t65" style="top:428.39px;font-size:9.4px;line-height:12.22px;color:#242424;letter-spacing:0.014px;left:333px;">The views were stunning</span>
<span class="t" id="t66" style="top:455.6px;font-size:7.7px;line-height:10.01px;color:#616161;letter-spacing:0.011px;left:322px;">Erika Fuller</span>
<span class="t" id="t67" style="top:455.6px;font-size:7.7px;line-height:10.01px;color:#616161;letter-spacing:0.297px;left:367.5px;">11:32 AM</span>
<span class="t" id="t68" style="top:474.09px;font-size:9.4px;line-height:12.22px;color:#242424;letter-spacing:0.112px;left:333px;">Happy to have you back, hope you had a restful time off.</span>
<span class="t" id="t69" style="top:524.02px;font-size:9.2px;line-height:11.96px;color:#6b6b6b;letter-spacing:-0.071px;left:330.5px;">Type a message</span>
<span class="t" id="t70" style="top:199.96px;font-size:9.6px;line-height:12.48px;color:#424242;letter-spacing:0.214px;left:750.2px;">All</span>
<span class="t" id="t71" style="top:199.96px;font-size:9.6px;line-height:12.48px;color:#4f52b2;letter-spacing:0.050px;left:790.3px;">Emoji</span>
<span class="t" id="t72" style="top:200.48px;font-size:8.8px;line-height:11.44px;color:#424242;letter-spacing:-0.487px;left:843.8px;">GIFs</span>
<span class="t" id="t73" style="top:200.22px;font-size:9.2px;line-height:11.96px;color:#424242;letter-spacing:-0.098px;left:891px;">Stickers</span>
<span class="t" id="t74" style="top:241.22px;font-size:9.2px;line-height:11.96px;color:#424242;letter-spacing:0.256px;left:747.5px;">Find something fun</span>
<span class="t" id="t75" style="top:271.01px;font-size:8.6px;line-height:11.18px;color:#242424;font-weight:700;letter-spacing:0.169px;left:739.5px;">Recent</span>
</div></div></body></html>
